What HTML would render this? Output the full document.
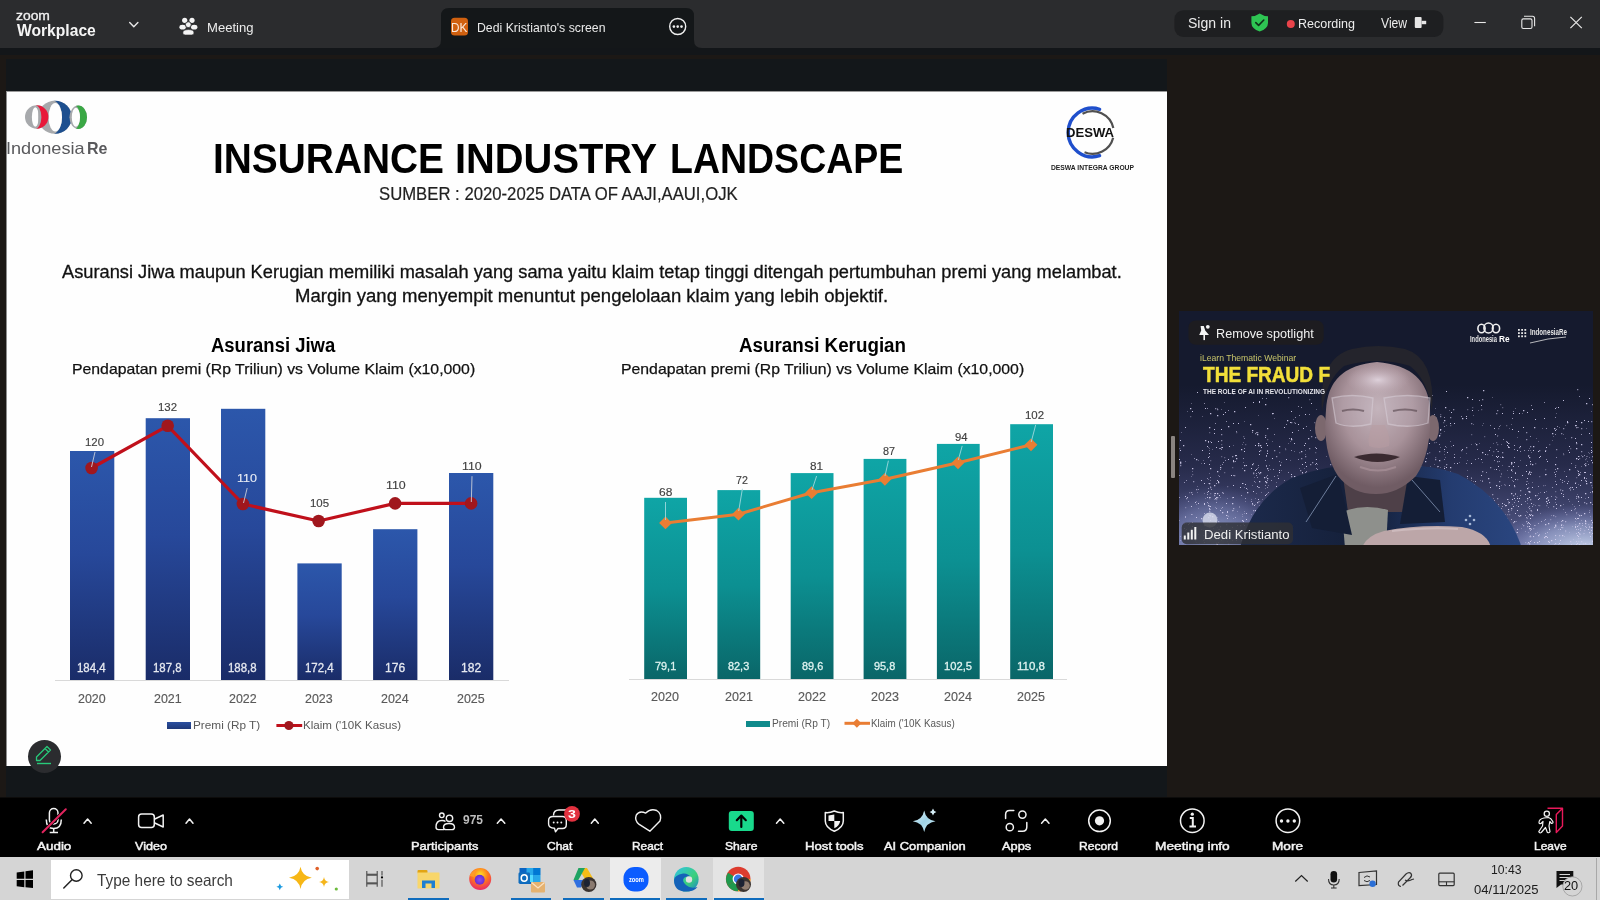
<!DOCTYPE html>
<html><head><meta charset="utf-8"><title>Zoom</title><style>
*{margin:0;padding:0;box-sizing:border-box}
html,body{width:1600px;height:900px;overflow:hidden;background:#1c1815;font-family:"Liberation Sans",sans-serif}
.a{position:absolute}
.t{position:absolute;white-space:pre;font-family:"Liberation Sans",sans-serif}
svg{position:absolute;overflow:visible}
</style></head>
<body>
<div class="a" style="left:0;top:0;width:1600px;height:48px;background:#2b2c2e"></div>
<div class="a" style="left:0;top:48px;width:1600px;height:7px;background:#131619"></div>
<div class="a" style="left:0;top:55px;width:1600px;height:742px;background:#1c1815"></div>
<div class="a" style="left:6px;top:59px;width:1161px;height:738px;background:#13171a"></div>
<div class="a" style="left:6px;top:91px;width:1161px;height:675px;background:#fefefe;border-left:1px solid #8e8e8e;border-top:1px solid #9a9a9a"></div>
<div class="a" style="left:0;top:797px;width:1600px;height:1px;background:#0d0c0b"></div>
<div class="a" style="left:0;top:798px;width:1600px;height:59px;background:#000"></div>
<div class="a" style="left:0;top:857px;width:1600px;height:43px;background:#d5d5d5"></div>
<div class="t" style="left:15.54px;top:10.00px;font-size:12.69px;line-height:12.69px;color:#f2f2f2;transform:scaleX(1.0933);transform-origin:0 0;-webkit-text-stroke:0.3px #f2f2f2;">zoom</div>
<div class="t" style="left:17.00px;top:23.00px;font-size:16.86px;line-height:16.86px;font-weight:bold;color:#f5f5f5;transform:scaleX(0.9274);transform-origin:0 0;">Workplace</div>
<svg class="a" style="left:0;top:0" width="1600" height="60">
<path d="M129.7,22.5 L133.8,26.7 L137.9,22.5" fill="none" stroke="#e8e8e8" stroke-width="1.4" stroke-linecap="round" stroke-linejoin="round"/>
<g fill="#f4f4f4"><circle cx="184.7" cy="20.3" r="2.6"/><circle cx="192" cy="20.3" r="2.6"/><ellipse cx="182.6" cy="27.2" rx="3.2" ry="2.4"/><ellipse cx="194.2" cy="27.2" rx="3.2" ry="2.4"/><circle cx="188.3" cy="24.7" r="2.9" stroke="#2b2c2e" stroke-width="0.8"/><path d="M182.8,33 Q182.8,29.6 188.4,29.6 Q194,29.6 194,33 Q194,35 191.5,35 L185.3,35 Q182.8,35 182.8,33Z" stroke="#2b2c2e" stroke-width="0.6"/></g>
<path d="M433,48 Q441,48 441,40 L441,16 Q441,8 449,8 L686,8 Q694,8 694,16 L694,40 Q694,48 702,48 Z" fill="#141719"/>
<rect x="451" y="17.8" width="17" height="17.6" rx="3.5" fill="#d0600f"/>
<circle cx="677.7" cy="26.5" r="8" fill="none" stroke="#f0f0f0" stroke-width="1.4"/><circle cx="673.9" cy="26.6" r="1.3" fill="#f0f0f0"/><circle cx="677.7" cy="26.6" r="1.3" fill="#f0f0f0"/><circle cx="681.5" cy="26.6" r="1.3" fill="#f0f0f0"/>
<rect x="1174.4" y="10.2" width="269" height="26.8" rx="9" fill="#1e1f21"/>
<path d="M1259.7,13.4 Q1263.5,16 1268,16.2 L1268,23 Q1268,28.5 1259.7,31.6 Q1251.4,28.5 1251.4,23 L1251.4,16.2 Q1256,16 1259.7,13.4Z" fill="#2ec553"/><path d="M1255.8,22.6 L1258.6,25.4 L1263.8,20" fill="none" stroke="#10331a" stroke-width="1.6" stroke-linecap="round" stroke-linejoin="round"/>
<circle cx="1290.8" cy="23.9" r="4" fill="#e9434a"/>
<rect x="1414.8" y="16.9" width="6.8" height="11" rx="1" fill="#e6e6e6"/><rect x="1421.6" y="20.8" width="4.6" height="3.4" fill="#e6e6e6"/>
<line x1="1474.4" y1="22.5" x2="1485.8" y2="22.5" stroke="#e8e8e8" stroke-width="1.1"/>
<rect x="1521.8" y="18.9" width="10.2" height="9.6" rx="1.5" fill="none" stroke="#e8e8e8" stroke-width="1.1"/><path d="M1524,16.3 L1532.5,16.3 Q1534.6,16.3 1534.6,18.4 L1534.6,26.3" fill="none" stroke="#e8e8e8" stroke-width="1.1"/>
<path d="M1570.4,16.8 L1581.8,28.2 M1581.8,16.8 L1570.4,28.2" stroke="#e8e8e8" stroke-width="1.2"/>
</svg>
<div class="t" style="left:206.77px;top:21.00px;font-size:13.23px;line-height:13.23px;color:#ececec;transform:scaleX(0.9905);transform-origin:0 0;">Meeting</div>
<div class="t" style="left:450.78px;top:22.00px;font-size:12.06px;line-height:12.06px;color:#fbe9dc;transform:scaleX(0.9778);transform-origin:0 0;">DK</div>
<div class="t" style="left:477.49px;top:21.00px;font-size:13.37px;line-height:13.37px;color:#eaeaea;transform:scaleX(0.9182);transform-origin:0 0;">Dedi Kristianto's screen</div>
<div class="t" style="left:1187.86px;top:16.00px;font-size:14.53px;line-height:14.53px;color:#ececec;transform:scaleX(0.9681);transform-origin:0 0;">Sign in</div>
<div class="t" style="left:1298.47px;top:17.00px;font-size:13.52px;line-height:13.52px;color:#ececec;transform:scaleX(0.9254);transform-origin:0 0;">Recording</div>
<div class="t" style="left:1380.50px;top:16.00px;font-size:14.53px;line-height:14.53px;color:#ececec;transform:scaleX(0.8384);transform-origin:0 0;">View</div>
<svg class="a" style="left:0;top:0" width="1600" height="900">
<defs>
<mask id="m1"><rect x="0" y="0" width="200" height="200" fill="#fff"/><ellipse cx="34.3" cy="117" rx="7.1" ry="12.2" fill="#000"/><rect x="0" y="0" width="34.3" height="200" fill="#000"/></mask>
<mask id="m2"><rect x="0" y="0" width="200" height="200" fill="#fff"/><ellipse cx="52" cy="117.25" rx="10" ry="16.9" fill="#000"/><rect x="0" y="0" width="52" height="200" fill="#000"/></mask>
<mask id="m3"><rect x="0" y="0" width="200" height="200" fill="#fff"/><ellipse cx="74" cy="117.25" rx="6" ry="12.1" fill="#000"/><rect x="0" y="0" width="74" height="200" fill="#000"/></mask>
</defs>
<ellipse cx="54.9" cy="117.25" rx="16.9" ry="16.5" fill="#a7a9ac"/>
<ellipse cx="54.9" cy="117.25" rx="16.9" ry="16.5" fill="#1d4f8f" mask="url(#m2)"/>
<ellipse cx="55.25" cy="117.25" rx="6.75" ry="14.3" fill="#fefefe"/>
<ellipse cx="36.7" cy="117" rx="11.7" ry="11.8" fill="#a7a9ac"/>
<ellipse cx="35.3" cy="117" rx="3.4" ry="9.8" fill="#fefefe"/>
<rect x="38.3" y="108" width="2.6" height="18" fill="#a7a9ac"/>
<ellipse cx="36.7" cy="117" rx="11.7" ry="11.8" fill="#e8193a" mask="url(#m1)"/>
<ellipse cx="78.25" cy="117.25" rx="8.75" ry="11.75" fill="#a7a9ac"/>
<ellipse cx="78.25" cy="117.25" rx="8.75" ry="11.75" fill="#3aa845" mask="url(#m3)"/>
<ellipse cx="75.9" cy="117.25" rx="4.1" ry="9.5" fill="#fefefe"/>
</svg>
<div class="t" style="left:5.74px;top:141.00px;font-size:16.72px;line-height:16.72px;color:#59595c;transform:scaleX(1.0845);transform-origin:0 0;">Indonesia</div>
<div class="t" style="left:87.13px;top:141.00px;font-size:16.72px;line-height:16.72px;font-weight:bold;color:#59595c;transform:scaleX(0.9572);transform-origin:0 0;">Re</div>
<svg class="a" style="left:0;top:0" width="1600" height="900"><path d="M1099.60,109.26 A24.3,24.3 0 1 0 1099.60,155.74" fill="none" stroke="#1f4fcc" stroke-width="3.4" stroke-linecap="round"/><path d="M1082.50,113.69 A21.3,21.3 0 0 1 1113.33,128.07" fill="none" stroke="#505050" stroke-width="2.2"/><path d="M1113.17,137.65 A21.3,21.3 0 0 1 1084.52,152.25" fill="none" stroke="#505050" stroke-width="2.2"/></svg>
<div class="t" style="left:1066.18px;top:126.00px;font-size:13.52px;line-height:13.52px;font-weight:bold;color:#111;transform:scaleX(0.9693);transform-origin:0 0;">DESWA</div>
<div class="t" style="left:1050.80px;top:164.00px;font-size:7.27px;line-height:7.27px;font-weight:bold;color:#222;transform:scaleX(0.9274);transform-origin:0 0;">DESWA INTEGRA GROUP</div>
<div class="t" style="left:213.19px;top:138.00px;font-size:41.93px;line-height:41.93px;font-weight:bold;color:#000;transform:scaleX(0.9270);transform-origin:0 0;">INSURANCE</div>
<div class="t" style="left:455.44px;top:138.00px;font-size:41.93px;line-height:41.93px;font-weight:bold;color:#000;transform:scaleX(0.9505);transform-origin:0 0;">INDUSTRY</div>
<div class="t" style="left:669.97px;top:138.00px;font-size:41.93px;line-height:41.93px;font-weight:bold;color:#000;transform:scaleX(0.8943);transform-origin:0 0;">LANDSCAPE</div>
<div class="t" style="left:378.99px;top:186.00px;font-size:17.88px;line-height:17.88px;color:#1f1f1f;transform:scaleX(0.9353);transform-origin:0 0;-webkit-text-stroke:0.2px #1f1f1f;">SUMBER : 2020-2025 DATA OF AAJI,AAUI,OJK</div>
<div class="t" style="left:61.90px;top:264.00px;font-size:17.44px;line-height:17.44px;color:#111;transform:scaleX(1.0463);transform-origin:0 0;-webkit-text-stroke:0.3px #111;">Asuransi Jiwa maupun Kerugian memiliki masalah yang sama yaitu klaim tetap tinggi ditengah pertumbuhan premi yang melambat.</div>
<div class="t" style="left:295.49px;top:288.00px;font-size:17.88px;line-height:17.88px;color:#111;transform:scaleX(1.0373);transform-origin:0 0;-webkit-text-stroke:0.3px #111;">Margin yang menyempit menuntut pengelolaan klaim yang lebih objektif.</div>
<div class="t" style="left:211.19px;top:336.00px;font-size:19.77px;line-height:19.77px;font-weight:bold;color:#000;transform:scaleX(0.9344);transform-origin:0 0;">Asuransi Jiwa</div>
<div class="t" style="left:72.10px;top:361.00px;font-size:15.12px;line-height:15.12px;color:#111;transform:scaleX(1.0459);transform-origin:0 0;-webkit-text-stroke:0.25px #111;">Pendapatan premi (Rp Triliun) vs Volume Klaim (x10,000)</div>
<div class="t" style="left:739.29px;top:336.00px;font-size:19.77px;line-height:19.77px;font-weight:bold;color:#000;transform:scaleX(0.9504);transform-origin:0 0;">Asuransi Kerugian</div>
<div class="t" style="left:621.19px;top:361.00px;font-size:15.12px;line-height:15.12px;color:#111;transform:scaleX(1.0459);transform-origin:0 0;-webkit-text-stroke:0.25px #111;">Pendapatan premi (Rp Triliun) vs Volume Klaim (x10,000)</div>
<div class="a" style="left:55px;top:680px;width:454px;height:1px;background:#d9d9d9"></div>
<svg class="a" style="left:0;top:0" width="1600" height="900" viewBox="0 0 1600 900">
<defs><linearGradient id="gb" x1="0" y1="0" x2="0" y2="1"><stop offset="0" stop-color="#2c57ab"/><stop offset="0.45" stop-color="#27489a"/><stop offset="1" stop-color="#1a2c68"/></linearGradient></defs>
<rect x="70" y="451" width="44.3" height="229" fill="url(#gb)"/>
<rect x="145.7" y="418.2" width="44.3" height="261.8" fill="url(#gb)"/>
<rect x="221" y="408.8" width="44.3" height="271.2" fill="url(#gb)"/>
<rect x="297.4" y="563.4" width="44.3" height="116.60000000000002" fill="url(#gb)"/>
<rect x="373.1" y="529.2" width="44.3" height="150.79999999999995" fill="url(#gb)"/>
<rect x="449" y="473" width="44.3" height="207" fill="url(#gb)"/>
<path d="M91.6,468 L167.7,425.8 L242.9,504 L318.6,521 L395.1,503.4 L471.1,503.4" fill="none" stroke="#c0101b" stroke-width="3.2" stroke-linejoin="round"/>
<circle cx="91.6" cy="468" r="6.3" fill="#a0171d"/>
<circle cx="167.7" cy="425.8" r="6.3" fill="#a0171d"/>
<circle cx="242.9" cy="504" r="6.3" fill="#a0171d"/>
<circle cx="318.6" cy="521" r="6.3" fill="#a0171d"/>
<circle cx="395.1" cy="503.4" r="6.3" fill="#a0171d"/>
<circle cx="471.1" cy="503.4" r="6.3" fill="#a0171d"/>
<line x1="95" y1="452" x2="91.5" y2="467" stroke="#c8cdd8" stroke-width="0.9"/>
<line x1="247.2" y1="488" x2="243.5" y2="503" stroke="#c8cdd8" stroke-width="0.9"/>
<line x1="472" y1="476.2" x2="471.3" y2="502" stroke="#c8cdd8" stroke-width="0.9"/>
</svg>
<div class="t" style="left:84.94px;top:437.00px;font-size:11.48px;line-height:11.48px;color:#404040;transform:scaleX(0.9939);transform-origin:0 0;-webkit-text-stroke:0.15px #404040;">120</div>
<div class="t" style="left:157.69px;top:402.00px;font-size:11.48px;line-height:11.48px;color:#404040;transform:scaleX(0.9939);transform-origin:0 0;-webkit-text-stroke:0.15px #404040;">132</div>
<div class="t" style="left:236.72px;top:473.00px;font-size:11.48px;line-height:11.48px;color:#e8ecf4;transform:scaleX(1.0874);transform-origin:0 0;-webkit-text-stroke:0.15px #e8ecf4;">110</div>
<div class="t" style="left:309.61px;top:498.00px;font-size:11.48px;line-height:11.48px;color:#404040;transform:scaleX(0.9982);transform-origin:0 0;-webkit-text-stroke:0.15px #404040;">105</div>
<div class="t" style="left:385.59px;top:480.00px;font-size:11.48px;line-height:11.48px;color:#404040;transform:scaleX(1.0812);transform-origin:0 0;-webkit-text-stroke:0.15px #404040;">110</div>
<div class="t" style="left:462.02px;top:461.00px;font-size:11.48px;line-height:11.48px;color:#404040;transform:scaleX(1.0756);transform-origin:0 0;-webkit-text-stroke:0.15px #404040;">110</div>
<div class="t" style="left:77.45px;top:662.00px;font-size:12.50px;line-height:12.50px;color:#e6e9f0;transform:scaleX(0.9154);transform-origin:0 0;-webkit-text-stroke:0.3px #e6e9f0;">184,4</div>
<div class="t" style="left:153.15px;top:662.00px;font-size:12.50px;line-height:12.50px;color:#e6e9f0;transform:scaleX(0.9154);transform-origin:0 0;-webkit-text-stroke:0.3px #e6e9f0;">187,8</div>
<div class="t" style="left:228.45px;top:662.00px;font-size:12.50px;line-height:12.50px;color:#e6e9f0;transform:scaleX(0.9154);transform-origin:0 0;-webkit-text-stroke:0.3px #e6e9f0;">188,8</div>
<div class="t" style="left:304.85px;top:662.00px;font-size:12.50px;line-height:12.50px;color:#e6e9f0;transform:scaleX(0.9154);transform-origin:0 0;-webkit-text-stroke:0.3px #e6e9f0;">172,4</div>
<div class="t" style="left:384.91px;top:662.00px;font-size:12.50px;line-height:12.50px;color:#e6e9f0;transform:scaleX(0.9644);transform-origin:0 0;-webkit-text-stroke:0.3px #e6e9f0;">176</div>
<div class="t" style="left:460.81px;top:662.00px;font-size:12.50px;line-height:12.50px;color:#e6e9f0;transform:scaleX(0.9644);transform-origin:0 0;-webkit-text-stroke:0.3px #e6e9f0;">182</div>
<div class="t" style="left:77.95px;top:693.00px;font-size:12.94px;line-height:12.94px;color:#595959;transform:scaleX(0.9613);transform-origin:0 0;-webkit-text-stroke:0.15px #595959;">2020</div>
<div class="t" style="left:153.65px;top:693.00px;font-size:12.94px;line-height:12.94px;color:#595959;transform:scaleX(0.9613);transform-origin:0 0;-webkit-text-stroke:0.15px #595959;">2021</div>
<div class="t" style="left:228.95px;top:693.00px;font-size:12.94px;line-height:12.94px;color:#595959;transform:scaleX(0.9613);transform-origin:0 0;-webkit-text-stroke:0.15px #595959;">2022</div>
<div class="t" style="left:305.35px;top:693.00px;font-size:12.94px;line-height:12.94px;color:#595959;transform:scaleX(0.9613);transform-origin:0 0;-webkit-text-stroke:0.15px #595959;">2023</div>
<div class="t" style="left:381.05px;top:693.00px;font-size:12.94px;line-height:12.94px;color:#595959;transform:scaleX(0.9613);transform-origin:0 0;-webkit-text-stroke:0.15px #595959;">2024</div>
<div class="t" style="left:456.95px;top:693.00px;font-size:12.94px;line-height:12.94px;color:#595959;transform:scaleX(0.9613);transform-origin:0 0;-webkit-text-stroke:0.15px #595959;">2025</div>
<div class="a" style="left:166.6px;top:722.2px;width:24.3px;height:7.3px;background:linear-gradient(#2a4f9f,#1f3878)"></div>
<div class="t" style="left:192.57px;top:720.00px;font-size:11.34px;line-height:11.34px;color:#595959;transform:scaleX(1.0401);transform-origin:0 0;">Premi (Rp T)</div>
<svg class="a" style="left:0;top:0" width="1600" height="900"><line x1="276.4" y1="725.5" x2="302.2" y2="725.5" stroke="#c0101b" stroke-width="3"/><circle cx="288.9" cy="725.5" r="4.6" fill="#a0171d"/></svg>
<div class="t" style="left:303.48px;top:720.00px;font-size:11.34px;line-height:11.34px;color:#595959;transform:scaleX(1.0231);transform-origin:0 0;">Klaim ('10K Kasus)</div>
<div class="a" style="left:629px;top:679px;width:438px;height:1px;background:#d9d9d9"></div>
<svg class="a" style="left:0;top:0" width="1600" height="900" viewBox="0 0 1600 900">
<defs><linearGradient id="gt" x1="0" y1="0" x2="0" y2="1"><stop offset="0" stop-color="#0fa5a6"/><stop offset="0.5" stop-color="#0c9092"/><stop offset="1" stop-color="#0a6668"/></linearGradient></defs>
<rect x="644.2" y="497.8" width="42.8" height="181.2" fill="url(#gt)"/>
<rect x="717.4" y="490.1" width="42.8" height="188.89999999999998" fill="url(#gt)"/>
<rect x="790.7" y="473.1" width="42.8" height="205.89999999999998" fill="url(#gt)"/>
<rect x="863.6" y="458.9" width="42.8" height="220.10000000000002" fill="url(#gt)"/>
<rect x="936.9" y="443.9" width="42.8" height="235.10000000000002" fill="url(#gt)"/>
<rect x="1010.2" y="424.2" width="42.8" height="254.8" fill="url(#gt)"/>
<path d="M665.5,522.9 L738.5,514.2 L811.6,492.7 L884.9,479.3 L958,462.8 L1031,444.8" fill="none" stroke="#e97d33" stroke-width="3" stroke-linejoin="round"/>
<path d="M665.5,516.5 L671.9,522.9 L665.5,529.3 L659.1,522.9 Z" fill="#e97d33"/>
<path d="M738.5,507.80000000000007 L744.9,514.2 L738.5,520.6 L732.1,514.2 Z" fill="#e97d33"/>
<path d="M811.6,486.3 L818.0,492.7 L811.6,499.09999999999997 L805.2,492.7 Z" fill="#e97d33"/>
<path d="M884.9,472.90000000000003 L891.3,479.3 L884.9,485.7 L878.5,479.3 Z" fill="#e97d33"/>
<path d="M958,456.40000000000003 L964.4,462.8 L958,469.2 L951.6,462.8 Z" fill="#e97d33"/>
<path d="M1031,438.40000000000003 L1037.4,444.8 L1031,451.2 L1024.6,444.8 Z" fill="#e97d33"/>
<line x1="665.5" y1="502" x2="665.5" y2="520" stroke="#9ed8dc" stroke-width="0.9"/>
<line x1="742.4" y1="488.8" x2="738.7" y2="511" stroke="#9ed8dc" stroke-width="0.9"/>
<line x1="816.6" y1="476" x2="812" y2="490" stroke="#9ed8dc" stroke-width="0.9"/>
<line x1="888.4" y1="460.7" x2="885" y2="476" stroke="#9ed8dc" stroke-width="0.9"/>
<line x1="962.2" y1="445.9" x2="958.3" y2="460" stroke="#9ed8dc" stroke-width="0.9"/>
<line x1="1035.7" y1="424.8" x2="1031.2" y2="442" stroke="#9ed8dc" stroke-width="0.9"/>
</svg>
<div class="t" style="left:658.60px;top:487.00px;font-size:11.05px;line-height:11.05px;color:#404040;transform:scaleX(1.0855);transform-origin:0 0;-webkit-text-stroke:0.15px #404040;">68</div>
<div class="t" style="left:736.11px;top:475.00px;font-size:11.05px;line-height:11.05px;color:#404040;transform:scaleX(0.9690);transform-origin:0 0;-webkit-text-stroke:0.15px #404040;">72</div>
<div class="t" style="left:809.61px;top:461.00px;font-size:11.05px;line-height:11.05px;color:#404040;transform:scaleX(1.0676);transform-origin:0 0;-webkit-text-stroke:0.15px #404040;">81</div>
<div class="t" style="left:882.70px;top:446.00px;font-size:11.05px;line-height:11.05px;color:#404040;transform:scaleX(0.9805);transform-origin:0 0;-webkit-text-stroke:0.15px #404040;">87</div>
<div class="t" style="left:954.98px;top:432.00px;font-size:11.05px;line-height:11.05px;color:#404040;transform:scaleX(1.0230);transform-origin:0 0;-webkit-text-stroke:0.15px #404040;">94</div>
<div class="t" style="left:1025.31px;top:410.00px;font-size:11.05px;line-height:11.05px;color:#404040;transform:scaleX(1.0376);transform-origin:0 0;-webkit-text-stroke:0.15px #404040;">102</div>
<div class="t" style="left:655.05px;top:660.00px;font-size:11.63px;line-height:11.63px;color:#dff3f0;transform:scaleX(0.9374);transform-origin:0 0;-webkit-text-stroke:0.3px #dff3f0;">79,1</div>
<div class="t" style="left:728.25px;top:660.00px;font-size:11.63px;line-height:11.63px;color:#dff3f0;transform:scaleX(0.9374);transform-origin:0 0;-webkit-text-stroke:0.3px #dff3f0;">82,3</div>
<div class="t" style="left:801.55px;top:660.00px;font-size:11.63px;line-height:11.63px;color:#dff3f0;transform:scaleX(0.9374);transform-origin:0 0;-webkit-text-stroke:0.3px #dff3f0;">89,6</div>
<div class="t" style="left:874.45px;top:660.00px;font-size:11.63px;line-height:11.63px;color:#dff3f0;transform:scaleX(0.9374);transform-origin:0 0;-webkit-text-stroke:0.3px #dff3f0;">95,8</div>
<div class="t" style="left:943.76px;top:660.00px;font-size:11.63px;line-height:11.63px;color:#dff3f0;transform:scaleX(0.9626);transform-origin:0 0;-webkit-text-stroke:0.3px #dff3f0;">102,5</div>
<div class="t" style="left:1017.06px;top:660.00px;font-size:11.63px;line-height:11.63px;color:#dff3f0;transform:scaleX(0.9923);transform-origin:0 0;-webkit-text-stroke:0.3px #dff3f0;">110,8</div>
<div class="t" style="left:651.34px;top:691.00px;font-size:12.21px;line-height:12.21px;color:#595959;transform:scaleX(1.0262);transform-origin:0 0;-webkit-text-stroke:0.15px #595959;">2020</div>
<div class="t" style="left:724.54px;top:691.00px;font-size:12.21px;line-height:12.21px;color:#595959;transform:scaleX(1.0262);transform-origin:0 0;-webkit-text-stroke:0.15px #595959;">2021</div>
<div class="t" style="left:797.84px;top:691.00px;font-size:12.21px;line-height:12.21px;color:#595959;transform:scaleX(1.0262);transform-origin:0 0;-webkit-text-stroke:0.15px #595959;">2022</div>
<div class="t" style="left:870.74px;top:691.00px;font-size:12.21px;line-height:12.21px;color:#595959;transform:scaleX(1.0262);transform-origin:0 0;-webkit-text-stroke:0.15px #595959;">2023</div>
<div class="t" style="left:944.04px;top:691.00px;font-size:12.21px;line-height:12.21px;color:#595959;transform:scaleX(1.0262);transform-origin:0 0;-webkit-text-stroke:0.15px #595959;">2024</div>
<div class="t" style="left:1017.34px;top:691.00px;font-size:12.21px;line-height:12.21px;color:#595959;transform:scaleX(1.0262);transform-origin:0 0;-webkit-text-stroke:0.15px #595959;">2025</div>
<div class="a" style="left:745.8px;top:721px;width:23.8px;height:5.6px;background:#0f8a8b"></div>
<div class="t" style="left:771.66px;top:719.00px;font-size:10.47px;line-height:10.47px;color:#595959;transform:scaleX(0.9727);transform-origin:0 0;">Premi (Rp T)</div>
<svg class="a" style="left:0;top:0" width="1600" height="900"><line x1="844.5" y1="723.3" x2="870" y2="723.3" stroke="#e97d33" stroke-width="3"/><path d="M856.9,718.8 L861.4,723.3 L856.9,727.8 L852.4,723.3Z" fill="#e97d33"/></svg>
<div class="t" style="left:871.28px;top:719.00px;font-size:10.47px;line-height:10.47px;color:#595959;transform:scaleX(0.9434);transform-origin:0 0;">Klaim ('10K Kasus)</div>
<div class="a" style="left:27.5px;top:739.5px;width:33px;height:33px;border-radius:50%;background:#2b2c2f"></div>
<svg class="a" style="left:0;top:0" width="1600" height="900"><path d="M36.5,760.5 L36.5,757 L47,746.5 L50.5,750 L40,760.5 Z M45,748.5 L48.5,752" fill="none" stroke="#28c97a" stroke-width="1.3" stroke-linejoin="round"/><line x1="37" y1="763.5" x2="51" y2="763.5" stroke="#28c97a" stroke-width="1.4"/></svg>
<div class="a" style="left:1170.7px;top:436px;width:4.2px;height:41.8px;background:#8a8480;border-radius:1px"></div>
<svg class="a" style="left:0;top:0" width="1600" height="900">
<defs><clipPath id="vc"><rect x="1179" y="311" width="414" height="234"/></clipPath><linearGradient id="haze" x1="0" y1="0" x2="0" y2="1"><stop offset="0" stop-color="#4a4c8a" stop-opacity="0"/><stop offset="0.5" stop-color="#50528e" stop-opacity="0.3"/><stop offset="1" stop-color="#7a80bc" stop-opacity="0.7"/></linearGradient><radialGradient id="gl1" cx="0.5" cy="0.5" r="0.5"><stop offset="0" stop-color="#b4c2ea" stop-opacity="0.95"/><stop offset="0.6" stop-color="#8f9ad0" stop-opacity="0.5"/><stop offset="1" stop-color="#6a70b0" stop-opacity="0"/></radialGradient><radialGradient id="gl2" cx="0.5" cy="0.5" r="0.5"><stop offset="0" stop-color="#d0dcf0" stop-opacity="1"/><stop offset="0.55" stop-color="#a8b4dc" stop-opacity="0.6"/><stop offset="1" stop-color="#7a80c0" stop-opacity="0"/></radialGradient><radialGradient id="face" cx="0.5" cy="0.35" r="0.6"><stop offset="0" stop-color="#c4b4bc"/><stop offset="0.55" stop-color="#a8929a"/><stop offset="1" stop-color="#705c64"/></radialGradient><radialGradient id="fore" cx="0.5" cy="0.5" r="0.5"><stop offset="0" stop-color="#e2d6e0" stop-opacity="0.9"/><stop offset="1" stop-color="#c0aab4" stop-opacity="0"/></radialGradient><linearGradient id="shirt" x1="0" y1="0" x2="1" y2="0"><stop offset="0" stop-color="#1c2a4c"/><stop offset="0.45" stop-color="#141f38"/><stop offset="0.75" stop-color="#243c70"/><stop offset="1" stop-color="#2a4680"/></linearGradient></defs>
<g clip-path="url(#vc)">
<rect x="1179" y="311" width="414" height="234" fill="#151a2e"/>
<rect x="1179" y="385" width="414" height="160" fill="url(#haze)"/>
<ellipse cx="1215" cy="540" rx="70" ry="55" fill="url(#gl1)" opacity="0.75"/>
<ellipse cx="1585" cy="552" rx="95" ry="48" fill="url(#gl2)"/>
<path d="M1429 452h1.3v1.3h-1.3zM1338 478h1v1h-1zM1344 512h1v1h-1zM1340 457h1v1h-1zM1371 524h1v1h-1zM1466 482h1.3v1.3h-1.3zM1404 543h1.3v1.3h-1.3zM1233 510h1v1h-1zM1232 467h1.3v1.3h-1.3zM1402 523h1.3v1.3h-1.3zM1553 436h1v1h-1zM1258 415h1v1h-1zM1227 486h1v1h-1zM1530 450h1v1h-1zM1555 535h1.3v1.3h-1.3zM1320 507h1.3v1.3h-1.3zM1285 449h1.3v1.3h-1.3zM1296 500h1v1h-1zM1305 526h1v1h-1zM1379 420h1v1h-1zM1508 509h1.3v1.3h-1.3zM1445 482h1v1h-1zM1508 477h1v1h-1zM1592 492h1.3v1.3h-1.3zM1277 475h1.3v1.3h-1.3zM1574 506h1v1h-1zM1258 519h1v1h-1zM1210 516h1v1h-1zM1397 469h1v1h-1zM1366 480h1v1h-1zM1180 461h1.3v1.3h-1.3zM1247 489h1v1h-1zM1507 470h1v1h-1zM1440 414h1.3v1.3h-1.3zM1391 482h1v1h-1zM1192 471h1v1h-1zM1423 505h1.3v1.3h-1.3zM1294 533h1v1h-1zM1465 512h1v1h-1zM1285 448h1v1h-1zM1339 494h1.3v1.3h-1.3zM1379 518h1v1h-1zM1402 493h1.3v1.3h-1.3zM1473 517h1v1h-1zM1267 529h1.3v1.3h-1.3zM1514 445h1v1h-1zM1576 477h1.3v1.3h-1.3zM1244 511h1v1h-1zM1242 444h1v1h-1zM1261 492h1v1h-1zM1529 536h1.3v1.3h-1.3zM1279 496h1v1h-1zM1496 442h1.3v1.3h-1.3zM1540 492h1v1h-1zM1583 544h1.3v1.3h-1.3zM1454 540h1v1h-1zM1371 412h1v1h-1zM1526 481h1v1h-1zM1338 489h1v1h-1zM1570 489h1v1h-1zM1434 511h1v1h-1zM1210 509h1v1h-1zM1563 504h1v1h-1zM1449 492h1v1h-1zM1418 393h1v1h-1zM1508 501h1v1h-1zM1324 545h1v1h-1zM1387 440h1.3v1.3h-1.3zM1474 515h1v1h-1zM1444 451h1v1h-1zM1257 543h1.3v1.3h-1.3zM1417 494h1v1h-1zM1508 502h1v1h-1zM1427 544h1.3v1.3h-1.3zM1380 493h1v1h-1zM1565 425h1v1h-1zM1190 416h1.3v1.3h-1.3zM1209 527h1.3v1.3h-1.3zM1306 484h1v1h-1zM1209 532h1v1h-1zM1364 541h1.3v1.3h-1.3zM1465 535h1v1h-1zM1445 470h1v1h-1zM1245 501h1v1h-1zM1512 480h1v1h-1zM1343 487h1.3v1.3h-1.3zM1440 523h1v1h-1zM1445 531h1v1h-1zM1210 486h1v1h-1zM1253 472h1.3v1.3h-1.3zM1306 531h1.3v1.3h-1.3zM1389 455h1v1h-1zM1217 408h1v1h-1zM1272 441h1v1h-1zM1216 544h1v1h-1zM1208 479h1v1h-1zM1555 502h1v1h-1zM1233 445h1v1h-1zM1550 519h1.3v1.3h-1.3zM1306 526h1.3v1.3h-1.3zM1204 535h1v1h-1zM1565 530h1.3v1.3h-1.3zM1301 489h1.3v1.3h-1.3zM1570 490h1v1h-1zM1313 487h1v1h-1zM1576 513h1v1h-1zM1527 543h1.3v1.3h-1.3zM1280 464h1v1h-1zM1537 495h1v1h-1zM1339 526h1.3v1.3h-1.3zM1208 503h1v1h-1zM1394 537h1v1h-1zM1344 540h1v1h-1zM1450 471h1v1h-1zM1224 402h1v1h-1zM1447 486h1v1h-1zM1556 407h1v1h-1zM1496 534h1v1h-1zM1295 482h1v1h-1zM1467 478h1v1h-1zM1525 542h1.3v1.3h-1.3zM1301 527h1.3v1.3h-1.3zM1302 473h1.3v1.3h-1.3zM1208 447h1v1h-1zM1290 523h1v1h-1zM1245 444h1.3v1.3h-1.3zM1372 487h1v1h-1zM1572 504h1v1h-1zM1187 411h1v1h-1zM1466 453h1v1h-1zM1526 511h1v1h-1zM1483 494h1v1h-1zM1198 508h1v1h-1zM1429 469h1v1h-1zM1266 455h1v1h-1zM1427 538h1v1h-1zM1333 499h1v1h-1zM1384 496h1.3v1.3h-1.3zM1305 545h1v1h-1zM1509 447h1v1h-1zM1290 529h1v1h-1zM1185 530h1v1h-1zM1455 533h1.3v1.3h-1.3zM1197 486h1v1h-1zM1265 505h1v1h-1zM1527 503h1v1h-1zM1305 482h1v1h-1zM1395 434h1.3v1.3h-1.3zM1529 544h1.3v1.3h-1.3zM1472 509h1v1h-1zM1569 532h1v1h-1zM1434 485h1v1h-1zM1359 515h1v1h-1zM1412 491h1v1h-1zM1299 479h1.3v1.3h-1.3zM1254 532h1v1h-1zM1207 539h1.3v1.3h-1.3zM1508 503h1.3v1.3h-1.3zM1515 408h1v1h-1zM1214 499h1v1h-1zM1216 534h1v1h-1zM1586 456h1v1h-1zM1312 480h1.3v1.3h-1.3zM1383 513h1v1h-1zM1445 528h1v1h-1zM1577 427h1v1h-1zM1586 458h1v1h-1zM1352 530h1.3v1.3h-1.3zM1511 463h1.3v1.3h-1.3zM1204 545h1v1h-1zM1434 498h1v1h-1zM1528 532h1v1h-1zM1208 483h1v1h-1zM1255 482h1v1h-1zM1216 542h1v1h-1zM1484 540h1v1h-1zM1378 525h1.3v1.3h-1.3zM1401 417h1.3v1.3h-1.3zM1252 485h1v1h-1zM1185 461h1v1h-1zM1304 543h1v1h-1zM1434 442h1.3v1.3h-1.3zM1201 529h1v1h-1zM1267 513h1v1h-1zM1526 545h1v1h-1zM1316 475h1.3v1.3h-1.3zM1450 425h1.3v1.3h-1.3zM1578 538h1.3v1.3h-1.3zM1210 441h1v1h-1zM1369 498h1v1h-1zM1475 443h1v1h-1zM1536 438h1v1h-1zM1418 545h1.3v1.3h-1.3zM1434 524h1v1h-1zM1276 482h1v1h-1zM1243 442h1v1h-1zM1498 428h1.3v1.3h-1.3zM1251 514h1v1h-1zM1472 523h1v1h-1zM1228 516h1v1h-1zM1400 471h1v1h-1zM1392 406h1v1h-1zM1501 474h1v1h-1zM1373 543h1v1h-1zM1473 424h1v1h-1zM1530 463h1.3v1.3h-1.3zM1180 540h1v1h-1zM1266 509h1v1h-1zM1507 514h1.3v1.3h-1.3zM1558 529h1v1h-1zM1365 399h1.3v1.3h-1.3zM1465 521h1v1h-1zM1583 533h1.3v1.3h-1.3zM1345 471h1.3v1.3h-1.3zM1507 528h1v1h-1zM1198 460h1v1h-1zM1466 535h1v1h-1zM1498 515h1v1h-1zM1418 506h1v1h-1zM1463 500h1.3v1.3h-1.3zM1444 486h1v1h-1zM1502 465h1v1h-1zM1305 508h1v1h-1zM1233 518h1v1h-1zM1497 451h1v1h-1zM1442 528h1.3v1.3h-1.3zM1509 443h1v1h-1zM1444 431h1v1h-1zM1239 506h1v1h-1zM1576 519h1v1h-1zM1589 543h1v1h-1zM1242 468h1v1h-1zM1590 516h1v1h-1zM1186 523h1v1h-1zM1341 507h1v1h-1zM1584 530h1.3v1.3h-1.3zM1517 496h1v1h-1zM1474 501h1v1h-1zM1182 545h1v1h-1zM1505 485h1v1h-1zM1420 534h1v1h-1zM1397 531h1v1h-1zM1348 482h1.3v1.3h-1.3zM1333 474h1v1h-1zM1450 441h1v1h-1zM1196 542h1v1h-1zM1586 428h1v1h-1zM1592 487h1.3v1.3h-1.3zM1292 534h1v1h-1zM1262 499h1v1h-1zM1368 454h1.3v1.3h-1.3zM1394 507h1.3v1.3h-1.3zM1205 498h1v1h-1zM1281 470h1v1h-1zM1386 498h1v1h-1zM1512 471h1v1h-1zM1410 533h1v1h-1zM1433 535h1v1h-1zM1416 431h1.3v1.3h-1.3zM1537 532h1v1h-1zM1540 513h1v1h-1zM1416 480h1v1h-1zM1341 462h1.3v1.3h-1.3zM1478 527h1.3v1.3h-1.3zM1305 454h1v1h-1zM1579 456h1v1h-1zM1580 534h1v1h-1zM1181 432h1v1h-1zM1276 519h1v1h-1zM1201 463h1v1h-1zM1183 539h1v1h-1zM1294 422h1.3v1.3h-1.3zM1563 525h1v1h-1zM1280 526h1v1h-1zM1528 483h1v1h-1zM1255 514h1v1h-1zM1493 537h1v1h-1zM1591 435h1v1h-1zM1585 543h1v1h-1zM1368 471h1v1h-1zM1427 428h1v1h-1zM1259 501h1.3v1.3h-1.3zM1294 508h1v1h-1zM1417 419h1v1h-1zM1210 460h1.3v1.3h-1.3zM1514 539h1v1h-1zM1305 493h1v1h-1zM1255 511h1v1h-1zM1258 467h1v1h-1zM1224 472h1.3v1.3h-1.3zM1493 498h1v1h-1zM1444 530h1v1h-1zM1497 435h1.3v1.3h-1.3zM1439 520h1v1h-1zM1381 499h1v1h-1zM1337 536h1v1h-1zM1440 493h1.3v1.3h-1.3zM1436 442h1v1h-1zM1217 517h1v1h-1zM1314 532h1.3v1.3h-1.3zM1517 437h1v1h-1zM1579 458h1.3v1.3h-1.3zM1290 530h1v1h-1zM1334 468h1v1h-1zM1340 533h1v1h-1zM1279 527h1v1h-1zM1585 498h1v1h-1zM1390 460h1v1h-1zM1259 505h1.3v1.3h-1.3zM1552 440h1v1h-1zM1473 527h1v1h-1zM1290 441h1v1h-1zM1191 476h1v1h-1zM1558 544h1v1h-1zM1371 541h1v1h-1zM1227 498h1v1h-1zM1545 485h1v1h-1zM1268 485h1v1h-1zM1581 455h1v1h-1zM1315 452h1.3v1.3h-1.3zM1209 498h1.3v1.3h-1.3zM1199 543h1v1h-1zM1492 397h1v1h-1zM1320 532h1.3v1.3h-1.3zM1270 469h1v1h-1zM1327 410h1v1h-1zM1531 452h1v1h-1zM1279 511h1.3v1.3h-1.3zM1492 455h1v1h-1zM1371 502h1v1h-1zM1439 436h1v1h-1zM1375 545h1v1h-1zM1330 525h1v1h-1zM1466 514h1.3v1.3h-1.3zM1579 534h1v1h-1zM1329 535h1v1h-1zM1575 524h1.3v1.3h-1.3zM1340 516h1v1h-1zM1421 476h1.3v1.3h-1.3zM1445 457h1v1h-1zM1372 523h1.3v1.3h-1.3zM1440 447h1v1h-1zM1316 409h1v1h-1zM1258 531h1v1h-1zM1327 471h1v1h-1zM1269 514h1v1h-1zM1511 510h1v1h-1zM1539 476h1.3v1.3h-1.3zM1354 469h1.3v1.3h-1.3zM1435 513h1.3v1.3h-1.3zM1563 453h1v1h-1zM1435 539h1v1h-1zM1316 540h1.3v1.3h-1.3zM1542 428h1v1h-1zM1472 510h1.3v1.3h-1.3zM1293 419h1v1h-1zM1451 446h1v1h-1zM1449 534h1v1h-1zM1237 511h1v1h-1zM1244 487h1v1h-1zM1281 526h1.3v1.3h-1.3zM1372 492h1.3v1.3h-1.3zM1578 427h1v1h-1zM1500 404h1.3v1.3h-1.3zM1220 465h1v1h-1zM1468 481h1.3v1.3h-1.3zM1444 514h1v1h-1zM1435 408h1v1h-1zM1555 524h1.3v1.3h-1.3zM1464 537h1v1h-1zM1179 448h1.3v1.3h-1.3zM1227 515h1.3v1.3h-1.3zM1353 431h1v1h-1zM1497 444h1.3v1.3h-1.3zM1251 499h1v1h-1zM1368 489h1v1h-1zM1256 515h1v1h-1zM1509 428h1v1h-1zM1407 472h1.3v1.3h-1.3zM1475 525h1.3v1.3h-1.3zM1592 451h1.3v1.3h-1.3zM1516 532h1v1h-1zM1435 510h1v1h-1zM1574 509h1.3v1.3h-1.3zM1304 538h1v1h-1zM1587 456h1v1h-1zM1435 457h1.3v1.3h-1.3zM1566 514h1.3v1.3h-1.3zM1531 511h1.3v1.3h-1.3zM1305 531h1v1h-1zM1554 527h1.3v1.3h-1.3zM1269 506h1v1h-1zM1380 470h1.3v1.3h-1.3zM1502 543h1.3v1.3h-1.3zM1515 541h1v1h-1zM1326 456h1v1h-1zM1203 460h1v1h-1zM1406 495h1.3v1.3h-1.3zM1299 468h1v1h-1zM1398 422h1v1h-1zM1505 514h1v1h-1zM1244 451h1v1h-1zM1410 484h1v1h-1zM1472 529h1v1h-1zM1397 526h1.3v1.3h-1.3zM1204 493h1v1h-1zM1394 493h1v1h-1zM1345 535h1v1h-1zM1538 493h1v1h-1zM1479 443h1v1h-1zM1575 521h1v1h-1zM1501 523h1.3v1.3h-1.3zM1341 518h1v1h-1zM1297 539h1v1h-1zM1533 504h1.3v1.3h-1.3zM1367 541h1v1h-1zM1453 529h1v1h-1zM1380 476h1.3v1.3h-1.3zM1242 514h1v1h-1zM1243 436h1.3v1.3h-1.3zM1583 543h1.3v1.3h-1.3zM1467 470h1v1h-1zM1472 484h1.3v1.3h-1.3zM1266 505h1v1h-1zM1327 517h1.3v1.3h-1.3zM1368 485h1v1h-1zM1344 428h1v1h-1zM1371 500h1v1h-1zM1591 485h1.3v1.3h-1.3zM1591 411h1v1h-1zM1243 524h1v1h-1zM1420 532h1v1h-1zM1215 537h1v1h-1zM1589 457h1v1h-1zM1243 542h1v1h-1zM1192 514h1v1h-1zM1411 502h1v1h-1zM1338 544h1v1h-1zM1371 527h1v1h-1zM1305 519h1.3v1.3h-1.3zM1371 540h1v1h-1zM1304 468h1v1h-1zM1344 526h1v1h-1zM1589 510h1.3v1.3h-1.3zM1581 520h1v1h-1zM1496 536h1v1h-1zM1494 469h1v1h-1zM1255 504h1v1h-1zM1332 544h1v1h-1zM1563 434h1v1h-1zM1239 507h1v1h-1zM1484 436h1.3v1.3h-1.3zM1446 477h1v1h-1zM1535 463h1.3v1.3h-1.3zM1517 479h1.3v1.3h-1.3zM1440 480h1v1h-1zM1545 469h1.3v1.3h-1.3zM1228 536h1.3v1.3h-1.3zM1449 526h1v1h-1zM1209 448h1v1h-1zM1390 540h1v1h-1zM1427 468h1v1h-1zM1493 512h1v1h-1zM1460 457h1v1h-1zM1447 476h1v1h-1zM1530 510h1.3v1.3h-1.3zM1369 418h1v1h-1zM1321 425h1v1h-1zM1401 489h1v1h-1zM1317 513h1v1h-1zM1330 510h1.3v1.3h-1.3zM1379 521h1v1h-1zM1573 539h1v1h-1zM1528 516h1v1h-1zM1592 540h1v1h-1zM1417 451h1v1h-1zM1392 432h1v1h-1zM1509 514h1.3v1.3h-1.3zM1555 496h1.3v1.3h-1.3zM1445 520h1v1h-1zM1533 536h1.3v1.3h-1.3zM1472 525h1v1h-1zM1324 477h1v1h-1zM1421 482h1v1h-1zM1501 519h1.3v1.3h-1.3zM1224 457h1.3v1.3h-1.3zM1464 513h1.3v1.3h-1.3zM1444 520h1.3v1.3h-1.3zM1318 537h1v1h-1zM1497 436h1v1h-1zM1539 505h1.3v1.3h-1.3zM1418 543h1v1h-1zM1509 541h1v1h-1zM1402 452h1.3v1.3h-1.3zM1385 521h1v1h-1zM1500 457h1v1h-1zM1385 533h1v1h-1zM1227 533h1.3v1.3h-1.3zM1304 481h1v1h-1zM1464 489h1v1h-1zM1325 537h1.3v1.3h-1.3zM1544 520h1v1h-1zM1242 516h1v1h-1zM1301 488h1v1h-1zM1511 424h1v1h-1zM1313 497h1.3v1.3h-1.3zM1409 518h1v1h-1zM1258 530h1v1h-1zM1560 490h1v1h-1zM1501 485h1v1h-1zM1500 476h1.3v1.3h-1.3zM1483 423h1v1h-1zM1334 513h1v1h-1zM1471 499h1v1h-1zM1220 497h1v1h-1zM1180 536h1v1h-1zM1445 407h1v1h-1zM1196 501h1v1h-1zM1430 466h1v1h-1zM1303 531h1v1h-1zM1494 539h1v1h-1zM1257 468h1v1h-1zM1325 544h1v1h-1zM1467 460h1v1h-1zM1471 501h1.3v1.3h-1.3zM1555 491h1.3v1.3h-1.3zM1548 499h1.3v1.3h-1.3zM1243 523h1v1h-1zM1220 536h1v1h-1zM1501 473h1v1h-1zM1254 516h1v1h-1zM1549 444h1.3v1.3h-1.3zM1473 415h1v1h-1zM1243 483h1v1h-1zM1444 466h1.3v1.3h-1.3zM1386 520h1.3v1.3h-1.3zM1405 483h1.3v1.3h-1.3zM1185 507h1.3v1.3h-1.3zM1576 458h1.3v1.3h-1.3zM1294 451h1v1h-1zM1372 540h1.3v1.3h-1.3zM1328 475h1.3v1.3h-1.3zM1189 492h1.3v1.3h-1.3zM1422 541h1v1h-1zM1531 540h1v1h-1zM1209 432h1.3v1.3h-1.3zM1478 410h1v1h-1zM1221 409h1v1h-1zM1286 511h1v1h-1zM1306 488h1.3v1.3h-1.3zM1557 522h1v1h-1zM1440 499h1v1h-1zM1362 507h1v1h-1zM1290 494h1.3v1.3h-1.3zM1443 483h1.3v1.3h-1.3zM1336 460h1.3v1.3h-1.3zM1460 542h1v1h-1zM1564 536h1v1h-1zM1527 500h1v1h-1zM1442 532h1v1h-1zM1366 537h1v1h-1zM1459 510h1v1h-1zM1469 511h1v1h-1zM1473 481h1v1h-1zM1305 450h1v1h-1zM1449 410h1v1h-1zM1417 467h1.3v1.3h-1.3zM1577 494h1v1h-1zM1444 454h1v1h-1zM1366 535h1v1h-1zM1528 507h1v1h-1zM1317 464h1v1h-1zM1258 530h1v1h-1zM1527 518h1v1h-1zM1254 477h1v1h-1zM1482 462h1v1h-1zM1554 544h1v1h-1zM1449 490h1v1h-1zM1530 535h1v1h-1zM1374 458h1.3v1.3h-1.3zM1472 407h1.3v1.3h-1.3zM1417 506h1v1h-1zM1343 518h1v1h-1zM1437 497h1v1h-1zM1371 485h1.3v1.3h-1.3zM1340 529h1v1h-1zM1446 509h1v1h-1zM1555 516h1.3v1.3h-1.3zM1440 535h1.3v1.3h-1.3zM1266 494h1v1h-1zM1588 452h1v1h-1zM1389 467h1v1h-1zM1459 544h1v1h-1zM1589 453h1v1h-1zM1221 538h1.3v1.3h-1.3zM1559 427h1v1h-1zM1218 475h1v1h-1zM1324 534h1v1h-1zM1546 498h1v1h-1zM1410 478h1v1h-1zM1473 519h1v1h-1zM1443 422h1.3v1.3h-1.3zM1362 466h1.3v1.3h-1.3zM1362 480h1v1h-1zM1535 525h1v1h-1zM1314 537h1v1h-1zM1472 518h1v1h-1zM1428 525h1v1h-1zM1217 535h1v1h-1zM1367 473h1.3v1.3h-1.3zM1449 500h1v1h-1zM1525 531h1v1h-1zM1546 474h1v1h-1zM1471 480h1v1h-1zM1591 524h1v1h-1zM1221 508h1v1h-1zM1427 519h1v1h-1zM1410 507h1v1h-1zM1288 519h1.3v1.3h-1.3zM1425 517h1v1h-1zM1530 492h1v1h-1zM1392 491h1v1h-1zM1482 425h1v1h-1zM1209 450h1v1h-1zM1380 459h1v1h-1zM1467 409h1.3v1.3h-1.3zM1520 460h1v1h-1zM1464 504h1v1h-1zM1212 449h1v1h-1zM1471 444h1v1h-1zM1371 452h1.3v1.3h-1.3zM1445 535h1v1h-1zM1347 494h1v1h-1zM1290 460h1v1h-1zM1580 538h1v1h-1zM1258 521h1v1h-1zM1210 493h1.3v1.3h-1.3zM1278 511h1v1h-1zM1527 481h1v1h-1zM1264 528h1v1h-1zM1394 462h1v1h-1zM1576 512h1.3v1.3h-1.3zM1592 475h1v1h-1zM1578 514h1v1h-1zM1232 534h1v1h-1zM1445 525h1v1h-1zM1584 533h1v1h-1zM1548 507h1v1h-1zM1421 469h1.3v1.3h-1.3zM1487 512h1v1h-1zM1490 447h1v1h-1zM1281 462h1v1h-1zM1339 537h1v1h-1zM1463 499h1v1h-1zM1256 493h1v1h-1zM1274 418h1v1h-1zM1390 517h1v1h-1zM1591 534h1v1h-1zM1192 474h1.3v1.3h-1.3zM1286 489h1v1h-1zM1294 506h1v1h-1zM1336 504h1v1h-1zM1520 544h1v1h-1zM1236 432h1.3v1.3h-1.3zM1279 495h1.3v1.3h-1.3zM1446 513h1v1h-1zM1191 454h1v1h-1zM1528 487h1.3v1.3h-1.3zM1299 452h1.3v1.3h-1.3zM1380 472h1v1h-1zM1267 527h1.3v1.3h-1.3zM1227 541h1v1h-1zM1578 541h1.3v1.3h-1.3zM1243 462h1v1h-1zM1502 407h1.3v1.3h-1.3zM1218 542h1.3v1.3h-1.3zM1316 392h1.3v1.3h-1.3zM1402 503h1.3v1.3h-1.3zM1508 466h1v1h-1zM1367 507h1v1h-1zM1315 542h1.3v1.3h-1.3zM1471 434h1.3v1.3h-1.3zM1293 495h1.3v1.3h-1.3zM1538 441h1v1h-1zM1459 462h1v1h-1zM1279 532h1v1h-1zM1179 520h1v1h-1zM1368 469h1.3v1.3h-1.3zM1253 540h1v1h-1zM1493 443h1v1h-1zM1411 529h1v1h-1zM1563 454h1.3v1.3h-1.3zM1391 518h1v1h-1zM1522 413h1v1h-1zM1210 480h1v1h-1zM1267 493h1v1h-1zM1469 502h1v1h-1zM1305 523h1v1h-1zM1575 465h1.3v1.3h-1.3zM1484 528h1.3v1.3h-1.3zM1546 505h1.3v1.3h-1.3zM1368 542h1.3v1.3h-1.3zM1304 493h1v1h-1zM1578 525h1.3v1.3h-1.3zM1288 443h1v1h-1zM1427 534h1v1h-1zM1464 527h1v1h-1zM1481 409h1.3v1.3h-1.3zM1411 531h1v1h-1zM1339 468h1v1h-1zM1471 477h1v1h-1zM1286 517h1v1h-1zM1386 468h1.3v1.3h-1.3zM1551 515h1v1h-1zM1434 464h1v1h-1zM1302 519h1v1h-1zM1439 542h1v1h-1zM1214 532h1v1h-1zM1535 505h1v1h-1zM1477 522h1v1h-1zM1363 466h1v1h-1zM1373 545h1v1h-1zM1560 489h1.3v1.3h-1.3zM1342 513h1.3v1.3h-1.3zM1569 501h1v1h-1zM1463 485h1v1h-1zM1305 532h1v1h-1zM1440 467h1v1h-1zM1254 519h1.3v1.3h-1.3zM1244 421h1v1h-1zM1396 443h1v1h-1zM1221 444h1.3v1.3h-1.3zM1367 490h1.3v1.3h-1.3zM1279 452h1.3v1.3h-1.3zM1585 459h1.3v1.3h-1.3zM1555 543h1v1h-1zM1386 499h1.3v1.3h-1.3zM1372 426h1v1h-1zM1353 487h1.3v1.3h-1.3zM1556 497h1.3v1.3h-1.3zM1592 462h1.3v1.3h-1.3zM1322 491h1.3v1.3h-1.3zM1197 492h1v1h-1zM1357 519h1v1h-1zM1339 528h1v1h-1zM1361 487h1v1h-1zM1259 519h1v1h-1zM1393 543h1.3v1.3h-1.3zM1354 445h1v1h-1zM1508 528h1v1h-1zM1533 528h1.3v1.3h-1.3zM1499 519h1v1h-1zM1343 522h1v1h-1zM1368 465h1.3v1.3h-1.3zM1501 444h1v1h-1zM1425 538h1v1h-1zM1403 451h1.3v1.3h-1.3zM1221 456h1.3v1.3h-1.3zM1521 528h1v1h-1zM1587 461h1v1h-1zM1361 399h1v1h-1zM1512 504h1v1h-1zM1310 507h1.3v1.3h-1.3zM1279 505h1v1h-1zM1482 480h1v1h-1zM1556 413h1v1h-1zM1581 466h1v1h-1zM1522 524h1v1h-1zM1386 509h1v1h-1zM1196 504h1v1h-1zM1309 399h1.3v1.3h-1.3zM1578 484h1v1h-1zM1371 497h1v1h-1zM1350 492h1.3v1.3h-1.3zM1353 429h1v1h-1zM1376 515h1.3v1.3h-1.3zM1575 467h1v1h-1zM1191 403h1v1h-1zM1315 474h1v1h-1zM1310 491h1v1h-1zM1267 439h1.3v1.3h-1.3zM1570 448h1.3v1.3h-1.3zM1499 470h1v1h-1zM1361 461h1.3v1.3h-1.3zM1215 521h1v1h-1zM1349 458h1v1h-1zM1314 512h1v1h-1zM1502 456h1v1h-1zM1255 498h1v1h-1zM1471 494h1.3v1.3h-1.3zM1367 431h1v1h-1zM1593 471h1v1h-1zM1476 507h1v1h-1zM1511 525h1v1h-1zM1301 521h1v1h-1zM1546 491h1v1h-1zM1538 505h1v1h-1zM1220 527h1v1h-1zM1515 500h1v1h-1zM1363 468h1.3v1.3h-1.3zM1202 416h1v1h-1zM1287 508h1v1h-1zM1244 513h1v1h-1zM1480 480h1v1h-1zM1465 494h1.3v1.3h-1.3zM1504 484h1.3v1.3h-1.3zM1564 471h1v1h-1zM1508 499h1v1h-1zM1543 485h1.3v1.3h-1.3zM1334 460h1v1h-1zM1343 532h1.3v1.3h-1.3zM1464 520h1v1h-1zM1565 438h1v1h-1zM1266 477h1v1h-1zM1506 425h1.3v1.3h-1.3zM1216 499h1.3v1.3h-1.3zM1311 483h1v1h-1zM1532 482h1v1h-1zM1572 526h1v1h-1zM1409 449h1v1h-1zM1346 530h1v1h-1zM1314 422h1.3v1.3h-1.3zM1499 539h1v1h-1zM1215 507h1v1h-1zM1185 538h1v1h-1zM1588 524h1.3v1.3h-1.3zM1493 451h1.3v1.3h-1.3zM1447 517h1.3v1.3h-1.3zM1565 531h1.3v1.3h-1.3zM1500 425h1v1h-1zM1324 534h1v1h-1zM1338 450h1v1h-1zM1487 454h1.3v1.3h-1.3zM1252 541h1v1h-1zM1325 500h1v1h-1zM1493 517h1v1h-1zM1326 474h1v1h-1zM1517 537h1v1h-1zM1266 476h1v1h-1zM1529 448h1v1h-1zM1575 482h1.3v1.3h-1.3zM1399 489h1v1h-1zM1516 505h1v1h-1zM1577 470h1.3v1.3h-1.3zM1516 521h1v1h-1zM1227 486h1.3v1.3h-1.3zM1440 433h1.3v1.3h-1.3zM1563 509h1v1h-1zM1255 527h1v1h-1zM1449 538h1.3v1.3h-1.3zM1446 425h1v1h-1zM1209 473h1v1h-1zM1227 529h1.3v1.3h-1.3zM1446 447h1v1h-1zM1371 423h1v1h-1zM1503 539h1v1h-1zM1269 465h1v1h-1zM1265 488h1v1h-1zM1366 392h1v1h-1zM1270 515h1v1h-1zM1591 545h1v1h-1zM1527 512h1v1h-1zM1258 501h1v1h-1zM1379 545h1v1h-1zM1217 527h1v1h-1zM1593 460h1v1h-1z" fill="#d4cfee" fill-opacity="0.35"/>
<path d="M1399 541h1.3v1.3h-1.3zM1579 533h1.3v1.3h-1.3zM1450 417h1.3v1.3h-1.3zM1476 520h1v1h-1zM1445 500h1v1h-1zM1554 472h1v1h-1zM1509 532h1v1h-1zM1444 501h1v1h-1zM1219 476h1v1h-1zM1245 534h1.3v1.3h-1.3zM1198 534h1v1h-1zM1403 480h1v1h-1zM1209 530h1v1h-1zM1236 431h1v1h-1zM1473 485h1.3v1.3h-1.3zM1559 535h1.3v1.3h-1.3zM1252 432h1v1h-1zM1305 472h1.3v1.3h-1.3zM1285 507h1v1h-1zM1434 414h1v1h-1zM1519 447h1.3v1.3h-1.3zM1353 427h1.3v1.3h-1.3zM1235 461h1v1h-1zM1332 492h1.3v1.3h-1.3zM1302 484h1.3v1.3h-1.3zM1366 526h1v1h-1zM1315 437h1.3v1.3h-1.3zM1367 543h1.3v1.3h-1.3zM1312 462h1.3v1.3h-1.3zM1485 510h1v1h-1zM1390 446h1.3v1.3h-1.3zM1426 458h1v1h-1zM1501 543h1.3v1.3h-1.3zM1545 533h1v1h-1zM1265 460h1v1h-1zM1460 523h1v1h-1zM1279 519h1v1h-1zM1578 473h1.3v1.3h-1.3zM1341 521h1.3v1.3h-1.3zM1584 464h1v1h-1zM1499 426h1v1h-1zM1291 514h1v1h-1zM1342 423h1.3v1.3h-1.3zM1563 428h1.3v1.3h-1.3zM1254 534h1v1h-1zM1453 409h1.3v1.3h-1.3zM1281 527h1v1h-1zM1330 487h1v1h-1zM1571 437h1.3v1.3h-1.3zM1364 480h1v1h-1zM1345 524h1v1h-1zM1452 524h1.3v1.3h-1.3zM1295 423h1v1h-1zM1192 494h1v1h-1zM1211 489h1v1h-1zM1556 457h1v1h-1zM1267 451h1v1h-1zM1265 528h1v1h-1zM1472 509h1v1h-1zM1253 521h1v1h-1zM1453 490h1v1h-1zM1362 499h1v1h-1zM1330 481h1v1h-1zM1219 448h1v1h-1zM1226 524h1.3v1.3h-1.3zM1179 497h1v1h-1zM1417 426h1v1h-1zM1371 484h1.3v1.3h-1.3zM1244 438h1v1h-1zM1299 522h1v1h-1zM1561 527h1v1h-1zM1288 397h1.3v1.3h-1.3zM1220 531h1v1h-1zM1524 450h1v1h-1zM1350 417h1v1h-1zM1417 477h1v1h-1zM1432 395h1v1h-1zM1352 471h1v1h-1zM1463 491h1.3v1.3h-1.3zM1284 529h1v1h-1zM1571 463h1v1h-1zM1570 487h1.3v1.3h-1.3zM1291 496h1v1h-1zM1576 498h1v1h-1zM1561 524h1.3v1.3h-1.3zM1286 519h1v1h-1zM1492 533h1.3v1.3h-1.3zM1530 446h1.3v1.3h-1.3zM1372 449h1.3v1.3h-1.3zM1461 536h1v1h-1zM1428 475h1v1h-1zM1333 520h1v1h-1zM1404 467h1.3v1.3h-1.3zM1475 505h1.3v1.3h-1.3zM1424 478h1.3v1.3h-1.3zM1562 482h1v1h-1zM1305 526h1.3v1.3h-1.3zM1389 446h1.3v1.3h-1.3zM1389 493h1.3v1.3h-1.3zM1196 489h1.3v1.3h-1.3zM1453 531h1v1h-1zM1342 532h1.3v1.3h-1.3zM1528 456h1v1h-1zM1310 540h1.3v1.3h-1.3zM1492 494h1.3v1.3h-1.3zM1306 471h1v1h-1zM1575 508h1v1h-1zM1373 511h1v1h-1zM1233 475h1v1h-1zM1207 478h1v1h-1zM1445 500h1v1h-1zM1547 532h1v1h-1zM1245 498h1v1h-1zM1217 409h1.3v1.3h-1.3zM1515 472h1v1h-1zM1426 479h1v1h-1zM1496 456h1v1h-1zM1192 522h1v1h-1zM1532 506h1v1h-1zM1333 423h1v1h-1zM1378 483h1.3v1.3h-1.3zM1268 502h1.3v1.3h-1.3zM1302 519h1.3v1.3h-1.3zM1258 544h1v1h-1zM1198 489h1v1h-1zM1461 498h1.3v1.3h-1.3zM1418 540h1v1h-1zM1515 493h1v1h-1zM1361 475h1v1h-1zM1555 469h1v1h-1zM1315 526h1.3v1.3h-1.3zM1222 464h1v1h-1zM1440 430h1v1h-1zM1576 443h1.3v1.3h-1.3zM1553 506h1.3v1.3h-1.3zM1428 490h1v1h-1zM1414 525h1.3v1.3h-1.3zM1497 498h1.3v1.3h-1.3zM1529 506h1v1h-1zM1368 521h1v1h-1zM1302 535h1.3v1.3h-1.3zM1344 502h1v1h-1zM1416 503h1.3v1.3h-1.3zM1422 536h1v1h-1zM1372 540h1.3v1.3h-1.3zM1538 486h1v1h-1zM1399 520h1v1h-1zM1394 479h1v1h-1zM1578 497h1.3v1.3h-1.3zM1265 485h1v1h-1zM1513 522h1.3v1.3h-1.3zM1445 446h1v1h-1zM1316 527h1v1h-1zM1576 533h1v1h-1zM1479 400h1v1h-1zM1434 420h1v1h-1zM1385 458h1v1h-1zM1279 446h1.3v1.3h-1.3zM1390 521h1v1h-1zM1441 501h1v1h-1zM1414 447h1v1h-1zM1561 433h1.3v1.3h-1.3zM1291 422h1.3v1.3h-1.3zM1221 530h1v1h-1zM1541 521h1v1h-1zM1569 488h1v1h-1zM1240 525h1.3v1.3h-1.3zM1509 447h1v1h-1zM1218 521h1.3v1.3h-1.3zM1371 488h1.3v1.3h-1.3zM1461 416h1v1h-1zM1345 439h1v1h-1zM1444 527h1.3v1.3h-1.3zM1424 535h1.3v1.3h-1.3zM1391 432h1v1h-1zM1581 434h1v1h-1zM1395 497h1v1h-1zM1208 517h1.3v1.3h-1.3zM1495 520h1v1h-1zM1471 526h1.3v1.3h-1.3zM1265 503h1v1h-1zM1376 458h1v1h-1zM1584 455h1v1h-1zM1338 480h1.3v1.3h-1.3zM1527 526h1.3v1.3h-1.3zM1380 471h1v1h-1zM1438 466h1v1h-1zM1429 504h1.3v1.3h-1.3zM1221 540h1v1h-1zM1499 515h1v1h-1zM1555 543h1.3v1.3h-1.3zM1389 418h1v1h-1zM1411 506h1v1h-1zM1184 523h1.3v1.3h-1.3zM1416 431h1v1h-1zM1449 537h1.3v1.3h-1.3zM1372 478h1v1h-1zM1299 415h1v1h-1zM1525 501h1v1h-1zM1484 525h1v1h-1zM1252 504h1.3v1.3h-1.3zM1257 517h1v1h-1zM1266 465h1v1h-1zM1343 521h1v1h-1zM1260 450h1.3v1.3h-1.3zM1553 515h1.3v1.3h-1.3zM1446 500h1.3v1.3h-1.3zM1546 428h1v1h-1zM1454 454h1v1h-1zM1221 440h1.3v1.3h-1.3zM1210 520h1v1h-1zM1411 523h1v1h-1zM1216 502h1v1h-1zM1315 464h1v1h-1zM1339 531h1v1h-1zM1544 402h1v1h-1zM1221 449h1v1h-1zM1509 530h1.3v1.3h-1.3zM1221 447h1.3v1.3h-1.3zM1499 481h1.3v1.3h-1.3zM1527 523h1.3v1.3h-1.3zM1395 514h1v1h-1zM1501 530h1v1h-1zM1389 473h1v1h-1zM1428 544h1v1h-1zM1571 544h1v1h-1zM1279 536h1.3v1.3h-1.3zM1291 480h1v1h-1zM1502 506h1v1h-1zM1330 464h1.3v1.3h-1.3zM1193 481h1.3v1.3h-1.3zM1295 498h1v1h-1zM1565 521h1.3v1.3h-1.3zM1554 527h1v1h-1zM1499 522h1v1h-1zM1531 510h1v1h-1zM1215 423h1v1h-1zM1216 508h1v1h-1zM1223 493h1v1h-1zM1589 527h1v1h-1zM1316 468h1v1h-1zM1345 451h1v1h-1zM1311 523h1v1h-1zM1368 400h1v1h-1zM1531 529h1v1h-1zM1180 465h1.3v1.3h-1.3zM1266 509h1v1h-1zM1256 473h1v1h-1zM1497 410h1.3v1.3h-1.3zM1520 451h1v1h-1zM1486 472h1v1h-1zM1280 519h1v1h-1zM1324 536h1v1h-1zM1449 542h1v1h-1zM1328 522h1v1h-1zM1433 533h1.3v1.3h-1.3zM1256 534h1v1h-1zM1253 473h1.3v1.3h-1.3zM1530 536h1.3v1.3h-1.3zM1528 455h1.3v1.3h-1.3zM1222 492h1.3v1.3h-1.3zM1580 472h1v1h-1zM1182 537h1.3v1.3h-1.3zM1438 517h1v1h-1zM1514 486h1.3v1.3h-1.3zM1313 476h1.3v1.3h-1.3zM1515 494h1v1h-1zM1576 427h1.3v1.3h-1.3zM1454 463h1v1h-1zM1420 508h1v1h-1zM1534 525h1v1h-1zM1223 462h1v1h-1zM1343 449h1.3v1.3h-1.3zM1379 506h1v1h-1zM1344 529h1v1h-1zM1502 452h1.3v1.3h-1.3zM1196 527h1v1h-1zM1361 507h1.3v1.3h-1.3zM1417 436h1v1h-1zM1232 497h1.3v1.3h-1.3zM1414 522h1v1h-1zM1379 427h1.3v1.3h-1.3zM1576 529h1v1h-1zM1291 476h1.3v1.3h-1.3zM1539 450h1.3v1.3h-1.3zM1514 502h1v1h-1zM1445 543h1.3v1.3h-1.3zM1207 502h1v1h-1zM1265 435h1.3v1.3h-1.3zM1380 443h1.3v1.3h-1.3zM1485 493h1v1h-1zM1214 493h1.3v1.3h-1.3zM1448 508h1v1h-1zM1478 458h1v1h-1zM1592 504h1v1h-1zM1332 403h1v1h-1zM1343 498h1v1h-1zM1578 529h1v1h-1zM1278 498h1v1h-1zM1555 417h1v1h-1zM1317 489h1v1h-1zM1256 432h1v1h-1zM1471 423h1.3v1.3h-1.3zM1226 421h1v1h-1zM1291 511h1v1h-1zM1345 523h1v1h-1zM1410 501h1v1h-1zM1414 426h1v1h-1zM1338 511h1v1h-1zM1398 534h1.3v1.3h-1.3zM1195 540h1.3v1.3h-1.3zM1445 538h1v1h-1zM1339 499h1v1h-1zM1361 452h1.3v1.3h-1.3zM1577 389h1.3v1.3h-1.3zM1179 497h1v1h-1zM1579 544h1v1h-1zM1273 413h1v1h-1zM1476 519h1v1h-1zM1194 458h1v1h-1zM1366 497h1v1h-1zM1427 453h1.3v1.3h-1.3zM1584 502h1.3v1.3h-1.3zM1365 528h1v1h-1zM1214 495h1.3v1.3h-1.3zM1531 472h1v1h-1zM1185 517h1v1h-1zM1373 536h1v1h-1zM1232 510h1.3v1.3h-1.3zM1309 448h1v1h-1zM1450 506h1v1h-1zM1555 535h1v1h-1zM1310 543h1.3v1.3h-1.3zM1191 538h1v1h-1zM1390 535h1v1h-1zM1530 524h1v1h-1zM1421 466h1v1h-1zM1384 507h1v1h-1zM1258 465h1v1h-1zM1310 464h1.3v1.3h-1.3zM1380 518h1v1h-1zM1314 499h1.3v1.3h-1.3zM1528 474h1v1h-1zM1555 526h1.3v1.3h-1.3zM1274 541h1.3v1.3h-1.3zM1343 523h1v1h-1zM1462 515h1v1h-1zM1555 434h1v1h-1zM1509 545h1.3v1.3h-1.3zM1209 509h1.3v1.3h-1.3zM1284 480h1v1h-1zM1334 536h1.3v1.3h-1.3zM1314 536h1v1h-1zM1366 525h1v1h-1zM1301 407h1v1h-1zM1304 511h1v1h-1zM1575 467h1v1h-1zM1568 450h1v1h-1zM1530 446h1v1h-1zM1446 516h1.3v1.3h-1.3zM1251 501h1v1h-1zM1418 519h1.3v1.3h-1.3zM1469 485h1.3v1.3h-1.3zM1271 480h1v1h-1zM1435 459h1.3v1.3h-1.3zM1501 508h1v1h-1zM1434 474h1v1h-1zM1511 463h1.3v1.3h-1.3zM1191 492h1.3v1.3h-1.3zM1345 505h1v1h-1zM1526 517h1.3v1.3h-1.3zM1343 539h1.3v1.3h-1.3zM1209 538h1v1h-1zM1209 539h1.3v1.3h-1.3zM1360 430h1.3v1.3h-1.3zM1306 426h1v1h-1zM1315 511h1.3v1.3h-1.3zM1458 484h1v1h-1zM1581 451h1.3v1.3h-1.3zM1378 480h1.3v1.3h-1.3zM1369 490h1v1h-1zM1352 458h1v1h-1zM1526 439h1.3v1.3h-1.3zM1311 436h1.3v1.3h-1.3zM1297 530h1.3v1.3h-1.3zM1334 423h1v1h-1zM1228 410h1v1h-1zM1339 534h1v1h-1zM1433 538h1v1h-1zM1563 494h1v1h-1zM1414 533h1.3v1.3h-1.3zM1267 475h1v1h-1zM1210 477h1v1h-1zM1482 399h1.3v1.3h-1.3zM1589 512h1v1h-1zM1498 504h1v1h-1zM1291 450h1v1h-1zM1494 500h1v1h-1zM1262 398h1v1h-1zM1397 529h1v1h-1zM1354 513h1v1h-1zM1573 489h1v1h-1zM1386 410h1v1h-1zM1186 480h1v1h-1zM1482 532h1v1h-1zM1581 541h1.3v1.3h-1.3zM1491 523h1v1h-1zM1389 491h1v1h-1zM1418 463h1v1h-1zM1309 522h1v1h-1zM1256 475h1v1h-1zM1387 544h1v1h-1zM1511 469h1.3v1.3h-1.3zM1386 503h1.3v1.3h-1.3zM1279 523h1.3v1.3h-1.3zM1562 490h1.3v1.3h-1.3zM1444 426h1v1h-1zM1424 526h1.3v1.3h-1.3zM1333 524h1v1h-1zM1450 497h1v1h-1zM1217 497h1.3v1.3h-1.3zM1371 537h1.3v1.3h-1.3zM1487 539h1v1h-1zM1585 480h1.3v1.3h-1.3zM1580 528h1.3v1.3h-1.3zM1210 497h1v1h-1zM1216 483h1v1h-1zM1253 510h1.3v1.3h-1.3zM1421 418h1v1h-1zM1496 449h1v1h-1zM1531 405h1v1h-1zM1591 447h1v1h-1zM1267 535h1v1h-1zM1412 483h1v1h-1zM1582 525h1v1h-1zM1353 495h1v1h-1zM1556 429h1v1h-1zM1419 542h1v1h-1zM1397 500h1v1h-1zM1495 538h1v1h-1zM1439 444h1v1h-1zM1556 471h1v1h-1zM1586 503h1.3v1.3h-1.3zM1444 540h1.3v1.3h-1.3zM1298 406h1v1h-1zM1315 529h1v1h-1zM1396 455h1.3v1.3h-1.3zM1520 495h1v1h-1zM1362 463h1v1h-1zM1399 479h1v1h-1zM1203 535h1.3v1.3h-1.3zM1557 426h1v1h-1zM1512 418h1v1h-1zM1504 504h1v1h-1zM1343 531h1.3v1.3h-1.3zM1555 543h1v1h-1zM1203 540h1v1h-1zM1513 411h1v1h-1zM1340 535h1v1h-1zM1562 527h1.3v1.3h-1.3zM1420 441h1.3v1.3h-1.3zM1185 516h1v1h-1zM1303 479h1v1h-1zM1439 451h1.3v1.3h-1.3zM1273 529h1v1h-1zM1402 510h1.3v1.3h-1.3zM1209 506h1v1h-1zM1463 532h1.3v1.3h-1.3zM1514 457h1v1h-1zM1218 529h1v1h-1zM1317 469h1v1h-1zM1545 519h1v1h-1zM1552 487h1v1h-1zM1411 452h1v1h-1zM1209 522h1.3v1.3h-1.3zM1530 536h1v1h-1zM1221 434h1.3v1.3h-1.3zM1305 532h1v1h-1zM1343 518h1v1h-1zM1526 521h1.3v1.3h-1.3zM1466 447h1.3v1.3h-1.3zM1212 534h1v1h-1zM1353 538h1v1h-1zM1586 478h1v1h-1zM1475 540h1v1h-1zM1344 485h1.3v1.3h-1.3zM1290 515h1.3v1.3h-1.3zM1332 515h1v1h-1zM1443 519h1v1h-1zM1434 491h1.3v1.3h-1.3zM1592 456h1.3v1.3h-1.3zM1420 461h1.3v1.3h-1.3zM1556 449h1.3v1.3h-1.3zM1309 472h1.3v1.3h-1.3zM1398 521h1v1h-1zM1352 452h1.3v1.3h-1.3zM1267 514h1v1h-1zM1305 478h1v1h-1zM1253 463h1v1h-1zM1209 515h1v1h-1zM1416 520h1v1h-1zM1390 477h1.3v1.3h-1.3zM1498 451h1v1h-1zM1417 490h1.3v1.3h-1.3zM1454 525h1.3v1.3h-1.3zM1204 525h1.3v1.3h-1.3zM1279 461h1v1h-1zM1300 470h1.3v1.3h-1.3zM1508 446h1v1h-1zM1342 443h1.3v1.3h-1.3zM1363 494h1v1h-1zM1579 505h1v1h-1zM1314 540h1.3v1.3h-1.3zM1390 462h1v1h-1zM1274 434h1v1h-1zM1514 449h1v1h-1zM1385 533h1v1h-1zM1204 513h1v1h-1zM1257 477h1v1h-1zM1241 540h1v1h-1zM1215 408h1.3v1.3h-1.3zM1405 439h1.3v1.3h-1.3zM1286 520h1v1h-1zM1440 416h1.3v1.3h-1.3zM1222 537h1v1h-1zM1276 456h1.3v1.3h-1.3zM1374 484h1.3v1.3h-1.3zM1288 472h1v1h-1zM1273 469h1v1h-1zM1210 515h1v1h-1zM1494 460h1v1h-1zM1365 538h1.3v1.3h-1.3zM1299 533h1.3v1.3h-1.3zM1342 393h1v1h-1zM1388 506h1v1h-1zM1445 506h1v1h-1zM1466 504h1v1h-1zM1472 527h1.3v1.3h-1.3zM1581 428h1.3v1.3h-1.3zM1241 495h1v1h-1zM1339 485h1v1h-1zM1372 538h1v1h-1zM1349 408h1v1h-1zM1445 537h1v1h-1zM1565 512h1v1h-1zM1421 459h1v1h-1zM1428 391h1v1h-1zM1372 448h1.3v1.3h-1.3zM1352 479h1.3v1.3h-1.3zM1411 459h1.3v1.3h-1.3zM1233 508h1.3v1.3h-1.3zM1279 506h1.3v1.3h-1.3zM1374 484h1.3v1.3h-1.3zM1582 456h1.3v1.3h-1.3zM1528 450h1v1h-1zM1307 528h1v1h-1zM1268 541h1v1h-1zM1213 528h1v1h-1zM1562 480h1v1h-1zM1412 523h1v1h-1zM1405 427h1v1h-1zM1444 459h1v1h-1zM1339 482h1v1h-1zM1580 530h1v1h-1zM1269 521h1.3v1.3h-1.3zM1253 526h1v1h-1zM1397 542h1.3v1.3h-1.3zM1555 476h1v1h-1zM1309 414h1v1h-1zM1576 541h1v1h-1zM1204 403h1v1h-1zM1345 543h1v1h-1zM1343 494h1.3v1.3h-1.3zM1457 492h1v1h-1zM1288 508h1.3v1.3h-1.3zM1444 480h1.3v1.3h-1.3zM1508 511h1.3v1.3h-1.3zM1475 459h1v1h-1zM1527 488h1.3v1.3h-1.3zM1437 508h1.3v1.3h-1.3zM1291 499h1v1h-1zM1191 514h1v1h-1zM1259 473h1.3v1.3h-1.3zM1513 481h1v1h-1zM1526 432h1.3v1.3h-1.3zM1560 479h1v1h-1zM1207 494h1v1h-1zM1259 487h1v1h-1zM1471 478h1v1h-1zM1586 527h1v1h-1zM1443 526h1v1h-1zM1520 490h1.3v1.3h-1.3zM1274 511h1v1h-1zM1593 514h1.3v1.3h-1.3zM1260 509h1v1h-1zM1302 538h1v1h-1zM1410 500h1v1h-1zM1518 515h1.3v1.3h-1.3zM1268 492h1v1h-1zM1254 481h1v1h-1zM1570 541h1.3v1.3h-1.3zM1316 523h1v1h-1zM1255 433h1.3v1.3h-1.3zM1286 424h1v1h-1zM1266 545h1v1h-1zM1446 464h1.3v1.3h-1.3zM1455 520h1v1h-1zM1391 455h1v1h-1zM1298 430h1v1h-1zM1585 463h1.3v1.3h-1.3zM1305 456h1.3v1.3h-1.3zM1469 484h1v1h-1zM1510 541h1v1h-1zM1258 487h1v1h-1zM1362 531h1.3v1.3h-1.3zM1529 543h1.3v1.3h-1.3zM1466 463h1v1h-1zM1332 419h1.3v1.3h-1.3zM1435 469h1.3v1.3h-1.3zM1416 488h1.3v1.3h-1.3zM1518 543h1v1h-1zM1516 543h1v1h-1zM1266 398h1v1h-1zM1179 475h1v1h-1zM1267 487h1v1h-1zM1310 525h1v1h-1zM1364 442h1v1h-1zM1315 447h1v1h-1zM1267 498h1v1h-1zM1538 523h1v1h-1zM1480 509h1v1h-1zM1551 496h1v1h-1zM1304 483h1.3v1.3h-1.3zM1369 539h1v1h-1zM1394 474h1.3v1.3h-1.3zM1377 536h1v1h-1zM1492 534h1v1h-1zM1389 440h1.3v1.3h-1.3zM1180 463h1.3v1.3h-1.3zM1258 527h1.3v1.3h-1.3zM1450 504h1v1h-1zM1477 449h1v1h-1zM1232 456h1.3v1.3h-1.3zM1519 516h1v1h-1zM1295 477h1.3v1.3h-1.3zM1228 532h1v1h-1zM1446 491h1.3v1.3h-1.3zM1529 508h1.3v1.3h-1.3zM1234 475h1.3v1.3h-1.3zM1490 425h1v1h-1zM1474 537h1v1h-1zM1568 499h1v1h-1zM1530 464h1v1h-1zM1266 456h1v1h-1zM1497 461h1.3v1.3h-1.3zM1267 450h1v1h-1zM1529 492h1v1h-1zM1245 533h1v1h-1zM1372 495h1v1h-1zM1530 530h1v1h-1zM1576 425h1v1h-1zM1411 532h1.3v1.3h-1.3zM1527 526h1.3v1.3h-1.3zM1333 456h1v1h-1zM1367 489h1v1h-1zM1220 469h1v1h-1zM1191 528h1.3v1.3h-1.3zM1449 500h1v1h-1zM1507 518h1v1h-1zM1535 533h1.3v1.3h-1.3zM1407 504h1v1h-1zM1530 518h1v1h-1zM1576 496h1.3v1.3h-1.3zM1209 511h1.3v1.3h-1.3zM1251 533h1v1h-1zM1525 515h1v1h-1zM1305 536h1v1h-1zM1363 522h1v1h-1zM1590 492h1v1h-1zM1591 421h1.3v1.3h-1.3zM1490 528h1v1h-1zM1374 499h1.3v1.3h-1.3zM1513 495h1.3v1.3h-1.3zM1418 510h1v1h-1zM1294 476h1.3v1.3h-1.3zM1301 458h1.3v1.3h-1.3zM1555 481h1v1h-1zM1471 502h1v1h-1zM1490 467h1.3v1.3h-1.3zM1281 528h1v1h-1zM1446 525h1v1h-1zM1440 536h1.3v1.3h-1.3zM1345 468h1v1h-1zM1421 499h1v1h-1zM1274 476h1v1h-1zM1354 515h1v1h-1zM1582 523h1v1h-1zM1539 534h1v1h-1zM1313 495h1v1h-1zM1348 443h1v1h-1zM1268 470h1v1h-1zM1498 522h1v1h-1zM1257 523h1.3v1.3h-1.3zM1487 500h1.3v1.3h-1.3zM1561 521h1v1h-1zM1412 529h1v1h-1zM1411 493h1v1h-1zM1445 512h1v1h-1zM1394 499h1v1h-1zM1506 441h1.3v1.3h-1.3zM1295 417h1v1h-1zM1547 497h1.3v1.3h-1.3zM1488 520h1v1h-1zM1186 498h1.3v1.3h-1.3zM1210 487h1.3v1.3h-1.3zM1429 532h1.3v1.3h-1.3zM1445 482h1v1h-1zM1274 450h1.3v1.3h-1.3zM1385 473h1.3v1.3h-1.3zM1466 543h1v1h-1zM1309 448h1.3v1.3h-1.3zM1444 417h1v1h-1zM1592 462h1.3v1.3h-1.3zM1216 533h1v1h-1zM1511 519h1v1h-1zM1445 497h1.3v1.3h-1.3zM1461 450h1.3v1.3h-1.3zM1400 501h1v1h-1zM1546 459h1v1h-1zM1589 526h1v1h-1zM1376 429h1.3v1.3h-1.3zM1367 426h1.3v1.3h-1.3zM1531 514h1v1h-1zM1419 534h1v1h-1zM1509 466h1v1h-1zM1348 523h1v1h-1zM1304 530h1v1h-1zM1482 481h1v1h-1zM1496 413h1.3v1.3h-1.3zM1503 457h1v1h-1zM1579 396h1v1h-1zM1437 466h1.3v1.3h-1.3zM1266 494h1v1h-1zM1555 464h1.3v1.3h-1.3zM1478 495h1.3v1.3h-1.3zM1554 527h1v1h-1zM1285 509h1v1h-1zM1482 471h1.3v1.3h-1.3zM1285 494h1.3v1.3h-1.3zM1368 541h1v1h-1zM1568 481h1v1h-1zM1235 517h1v1h-1zM1499 543h1.3v1.3h-1.3zM1208 488h1v1h-1zM1207 408h1v1h-1zM1330 541h1v1h-1zM1502 537h1v1h-1zM1222 507h1v1h-1zM1511 464h1v1h-1zM1316 544h1.3v1.3h-1.3zM1588 464h1v1h-1zM1450 496h1.3v1.3h-1.3zM1490 500h1.3v1.3h-1.3zM1266 455h1v1h-1zM1564 481h1v1h-1zM1339 474h1.3v1.3h-1.3zM1188 501h1v1h-1zM1184 482h1v1h-1zM1305 486h1v1h-1zM1503 439h1v1h-1zM1373 498h1v1h-1zM1205 525h1v1h-1zM1282 535h1v1h-1zM1402 510h1v1h-1zM1228 543h1.3v1.3h-1.3zM1304 530h1v1h-1zM1319 480h1.3v1.3h-1.3zM1332 524h1v1h-1zM1463 545h1.3v1.3h-1.3zM1337 471h1v1h-1zM1389 481h1v1h-1zM1267 510h1v1h-1zM1343 437h1.3v1.3h-1.3zM1208 533h1v1h-1zM1335 506h1v1h-1zM1591 482h1v1h-1zM1404 456h1.3v1.3h-1.3zM1186 529h1v1h-1zM1220 448h1v1h-1zM1209 456h1v1h-1zM1203 530h1v1h-1zM1279 531h1.3v1.3h-1.3zM1258 472h1v1h-1zM1545 450h1.3v1.3h-1.3zM1423 444h1.3v1.3h-1.3zM1184 534h1.3v1.3h-1.3zM1289 438h1v1h-1zM1338 489h1.3v1.3h-1.3zM1446 538h1v1h-1zM1376 455h1v1h-1zM1225 460h1v1h-1zM1207 492h1v1h-1zM1592 527h1.3v1.3h-1.3zM1585 543h1.3v1.3h-1.3zM1530 436h1v1h-1zM1243 458h1v1h-1zM1208 442h1v1h-1zM1489 482h1.3v1.3h-1.3zM1501 524h1.3v1.3h-1.3zM1528 473h1.3v1.3h-1.3zM1304 536h1v1h-1zM1266 466h1v1h-1zM1403 502h1.3v1.3h-1.3zM1313 517h1.3v1.3h-1.3zM1459 526h1.3v1.3h-1.3zM1267 517h1v1h-1zM1257 432h1.3v1.3h-1.3zM1361 498h1v1h-1zM1367 533h1.3v1.3h-1.3zM1342 448h1v1h-1zM1415 523h1v1h-1zM1265 512h1v1h-1zM1420 474h1v1h-1zM1307 516h1.3v1.3h-1.3zM1592 404h1.3v1.3h-1.3zM1523 525h1.3v1.3h-1.3zM1441 522h1.3v1.3h-1.3zM1383 540h1.3v1.3h-1.3zM1267 480h1v1h-1zM1445 534h1.3v1.3h-1.3zM1514 445h1v1h-1zM1493 515h1.3v1.3h-1.3zM1529 471h1.3v1.3h-1.3zM1416 468h1.3v1.3h-1.3zM1291 503h1v1h-1zM1518 466h1v1h-1zM1310 430h1v1h-1zM1286 502h1v1h-1zM1468 497h1v1h-1zM1499 461h1v1h-1zM1344 492h1v1h-1zM1365 465h1v1h-1zM1528 491h1.3v1.3h-1.3zM1298 539h1v1h-1zM1516 537h1v1h-1zM1530 499h1.3v1.3h-1.3zM1351 489h1v1h-1zM1326 491h1v1h-1zM1585 526h1v1h-1zM1392 521h1v1h-1zM1353 541h1v1h-1zM1244 448h1v1h-1zM1298 459h1v1h-1z" fill="#d4cfee" fill-opacity="0.6"/>
<path d="M1257 486h1v1h-1zM1278 498h1v1h-1zM1529 457h1.3v1.3h-1.3zM1388 487h1v1h-1zM1361 519h1v1h-1zM1586 403h1.3v1.3h-1.3zM1401 512h1v1h-1zM1445 407h1.3v1.3h-1.3zM1533 536h1v1h-1zM1376 436h1v1h-1zM1253 522h1.3v1.3h-1.3zM1511 462h1.3v1.3h-1.3zM1563 400h1v1h-1zM1497 507h1v1h-1zM1507 545h1v1h-1zM1266 443h1v1h-1zM1373 542h1.3v1.3h-1.3zM1454 494h1.3v1.3h-1.3zM1215 493h1v1h-1zM1331 447h1.3v1.3h-1.3zM1309 486h1.3v1.3h-1.3zM1380 493h1.3v1.3h-1.3zM1576 487h1v1h-1zM1354 452h1v1h-1zM1591 527h1v1h-1zM1371 481h1v1h-1zM1227 511h1v1h-1zM1566 476h1v1h-1zM1529 526h1v1h-1zM1411 458h1v1h-1zM1343 530h1v1h-1zM1251 468h1v1h-1zM1533 450h1v1h-1zM1593 415h1.3v1.3h-1.3zM1442 542h1v1h-1zM1467 476h1v1h-1zM1470 538h1v1h-1zM1305 443h1v1h-1zM1266 544h1.3v1.3h-1.3zM1332 452h1v1h-1zM1220 537h1v1h-1zM1268 508h1.3v1.3h-1.3zM1454 423h1v1h-1zM1411 489h1.3v1.3h-1.3zM1341 500h1.3v1.3h-1.3zM1575 438h1v1h-1zM1180 450h1v1h-1zM1266 504h1v1h-1zM1264 526h1v1h-1zM1240 487h1v1h-1zM1300 503h1v1h-1zM1209 464h1v1h-1zM1578 536h1v1h-1zM1410 513h1.3v1.3h-1.3zM1546 536h1v1h-1zM1216 522h1v1h-1zM1434 494h1v1h-1zM1519 413h1v1h-1zM1440 513h1.3v1.3h-1.3zM1366 479h1v1h-1zM1332 543h1.3v1.3h-1.3zM1529 523h1v1h-1zM1315 505h1.3v1.3h-1.3zM1255 510h1v1h-1zM1258 527h1v1h-1zM1370 474h1v1h-1zM1508 447h1v1h-1zM1366 530h1v1h-1zM1422 521h1v1h-1zM1291 526h1.3v1.3h-1.3zM1233 497h1v1h-1zM1180 462h1.3v1.3h-1.3zM1205 408h1v1h-1zM1512 542h1v1h-1zM1345 535h1v1h-1zM1593 435h1v1h-1zM1300 531h1.3v1.3h-1.3zM1291 438h1v1h-1zM1217 471h1.3v1.3h-1.3zM1380 479h1v1h-1zM1488 478h1.3v1.3h-1.3zM1404 543h1v1h-1zM1529 497h1v1h-1zM1588 421h1v1h-1zM1417 466h1.3v1.3h-1.3zM1525 494h1v1h-1zM1311 403h1v1h-1zM1351 490h1v1h-1zM1592 491h1.3v1.3h-1.3zM1333 438h1.3v1.3h-1.3zM1413 423h1v1h-1zM1180 440h1v1h-1zM1359 478h1v1h-1zM1353 521h1.3v1.3h-1.3zM1366 495h1v1h-1zM1316 459h1v1h-1zM1315 493h1v1h-1zM1492 532h1v1h-1zM1245 484h1v1h-1zM1185 427h1v1h-1zM1567 421h1v1h-1zM1305 481h1v1h-1zM1466 542h1v1h-1zM1305 462h1v1h-1zM1365 466h1v1h-1zM1244 470h1.3v1.3h-1.3zM1578 475h1v1h-1zM1372 446h1v1h-1zM1581 497h1v1h-1zM1483 390h1.3v1.3h-1.3zM1221 429h1v1h-1zM1530 461h1v1h-1zM1467 533h1v1h-1zM1236 540h1v1h-1zM1188 524h1v1h-1zM1326 439h1v1h-1zM1411 481h1v1h-1zM1473 504h1v1h-1zM1422 541h1v1h-1zM1497 537h1.3v1.3h-1.3zM1514 462h1v1h-1zM1259 401h1v1h-1zM1555 474h1v1h-1zM1499 543h1v1h-1zM1577 518h1v1h-1zM1371 517h1v1h-1zM1501 538h1v1h-1zM1259 481h1.3v1.3h-1.3zM1385 544h1v1h-1zM1209 453h1v1h-1zM1380 422h1v1h-1zM1299 495h1.3v1.3h-1.3zM1389 544h1.3v1.3h-1.3zM1378 503h1v1h-1zM1408 425h1v1h-1zM1527 488h1v1h-1zM1192 468h1.3v1.3h-1.3zM1233 460h1v1h-1zM1588 529h1v1h-1zM1298 424h1v1h-1zM1458 533h1v1h-1zM1591 460h1v1h-1zM1219 529h1v1h-1zM1220 526h1v1h-1zM1218 481h1v1h-1zM1569 469h1.3v1.3h-1.3zM1507 442h1v1h-1zM1279 446h1v1h-1zM1389 510h1v1h-1zM1422 448h1.3v1.3h-1.3zM1214 485h1.3v1.3h-1.3zM1342 530h1v1h-1zM1572 487h1v1h-1zM1379 452h1v1h-1zM1339 504h1.3v1.3h-1.3zM1472 410h1v1h-1zM1303 537h1.3v1.3h-1.3zM1236 455h1v1h-1zM1368 461h1.3v1.3h-1.3zM1591 450h1v1h-1zM1366 483h1v1h-1zM1252 430h1.3v1.3h-1.3zM1280 465h1v1h-1zM1517 532h1v1h-1zM1576 544h1v1h-1zM1288 544h1v1h-1zM1338 509h1v1h-1zM1187 497h1v1h-1zM1562 520h1.3v1.3h-1.3zM1551 540h1.3v1.3h-1.3zM1485 544h1v1h-1zM1523 410h1.3v1.3h-1.3zM1266 527h1.3v1.3h-1.3zM1291 522h1.3v1.3h-1.3zM1279 488h1v1h-1zM1286 459h1v1h-1zM1332 504h1.3v1.3h-1.3zM1528 522h1v1h-1zM1232 503h1.3v1.3h-1.3zM1267 478h1.3v1.3h-1.3zM1481 459h1v1h-1zM1507 499h1v1h-1zM1408 542h1v1h-1zM1501 523h1.3v1.3h-1.3zM1267 535h1.3v1.3h-1.3zM1481 405h1v1h-1zM1538 451h1v1h-1zM1529 528h1v1h-1zM1554 428h1.3v1.3h-1.3zM1284 508h1.3v1.3h-1.3zM1318 474h1.3v1.3h-1.3zM1399 509h1.3v1.3h-1.3zM1424 425h1v1h-1zM1192 468h1v1h-1zM1468 510h1.3v1.3h-1.3zM1228 426h1.3v1.3h-1.3zM1340 519h1.3v1.3h-1.3zM1345 521h1v1h-1zM1196 517h1v1h-1zM1548 541h1.3v1.3h-1.3zM1345 500h1v1h-1zM1353 406h1v1h-1zM1253 402h1v1h-1zM1259 454h1v1h-1zM1341 530h1.3v1.3h-1.3zM1404 485h1.3v1.3h-1.3zM1539 457h1v1h-1zM1368 528h1v1h-1zM1368 498h1v1h-1zM1210 506h1v1h-1zM1341 446h1v1h-1zM1411 389h1.3v1.3h-1.3zM1361 457h1v1h-1zM1391 488h1.3v1.3h-1.3zM1365 489h1v1h-1zM1454 484h1v1h-1zM1344 491h1.3v1.3h-1.3zM1508 443h1v1h-1zM1527 478h1v1h-1zM1560 540h1v1h-1zM1215 498h1.3v1.3h-1.3zM1232 527h1v1h-1zM1208 491h1v1h-1zM1440 531h1.3v1.3h-1.3zM1584 420h1v1h-1zM1397 491h1v1h-1zM1282 496h1.3v1.3h-1.3zM1370 496h1v1h-1zM1498 456h1v1h-1zM1444 420h1.3v1.3h-1.3zM1475 481h1v1h-1zM1530 474h1v1h-1zM1383 485h1v1h-1zM1577 535h1v1h-1zM1386 533h1.3v1.3h-1.3zM1399 507h1v1h-1zM1357 495h1.3v1.3h-1.3zM1505 505h1.3v1.3h-1.3zM1280 497h1v1h-1zM1529 514h1.3v1.3h-1.3zM1369 464h1.3v1.3h-1.3zM1404 471h1.3v1.3h-1.3zM1267 540h1.3v1.3h-1.3zM1299 507h1v1h-1zM1534 542h1v1h-1zM1434 471h1v1h-1zM1302 464h1v1h-1zM1374 438h1v1h-1zM1225 412h1v1h-1zM1440 475h1v1h-1zM1394 402h1.3v1.3h-1.3zM1556 484h1v1h-1zM1320 473h1v1h-1zM1364 542h1v1h-1zM1496 485h1.3v1.3h-1.3zM1258 445h1.3v1.3h-1.3zM1303 428h1v1h-1zM1305 501h1v1h-1zM1343 441h1.3v1.3h-1.3zM1585 465h1.3v1.3h-1.3zM1520 515h1.3v1.3h-1.3zM1218 441h1v1h-1zM1592 522h1.3v1.3h-1.3zM1229 446h1v1h-1zM1202 450h1v1h-1zM1338 510h1v1h-1zM1535 419h1v1h-1zM1497 457h1v1h-1zM1588 497h1v1h-1zM1514 521h1.3v1.3h-1.3zM1365 457h1v1h-1zM1216 531h1v1h-1zM1585 521h1.3v1.3h-1.3zM1449 515h1v1h-1zM1578 459h1v1h-1zM1291 521h1v1h-1zM1287 420h1.3v1.3h-1.3zM1282 543h1v1h-1zM1265 404h1.3v1.3h-1.3zM1364 543h1v1h-1zM1235 455h1.3v1.3h-1.3zM1561 493h1v1h-1zM1591 530h1v1h-1zM1489 450h1v1h-1zM1259 451h1v1h-1zM1526 465h1v1h-1zM1474 484h1v1h-1zM1479 531h1v1h-1zM1305 531h1v1h-1zM1530 528h1.3v1.3h-1.3zM1241 449h1.3v1.3h-1.3zM1244 465h1.3v1.3h-1.3zM1497 542h1v1h-1zM1482 504h1v1h-1zM1387 479h1v1h-1zM1290 496h1v1h-1zM1414 469h1v1h-1zM1267 543h1v1h-1zM1386 421h1v1h-1zM1303 535h1v1h-1zM1196 459h1.3v1.3h-1.3zM1309 473h1v1h-1zM1429 443h1v1h-1zM1399 497h1v1h-1zM1444 468h1v1h-1zM1513 466h1v1h-1zM1496 529h1.3v1.3h-1.3zM1211 442h1v1h-1zM1333 507h1.3v1.3h-1.3zM1380 449h1v1h-1zM1278 478h1v1h-1zM1212 516h1.3v1.3h-1.3zM1590 536h1v1h-1zM1216 534h1v1h-1zM1362 524h1.3v1.3h-1.3zM1255 539h1v1h-1zM1440 498h1v1h-1zM1585 520h1v1h-1zM1440 429h1.3v1.3h-1.3zM1466 416h1v1h-1zM1214 429h1v1h-1zM1580 485h1v1h-1zM1527 412h1v1h-1zM1227 512h1v1h-1zM1380 452h1v1h-1zM1345 441h1v1h-1zM1273 516h1v1h-1zM1190 408h1.3v1.3h-1.3zM1421 545h1v1h-1zM1255 470h1v1h-1zM1302 509h1.3v1.3h-1.3zM1186 533h1.3v1.3h-1.3zM1567 422h1.3v1.3h-1.3zM1581 422h1.3v1.3h-1.3zM1389 538h1v1h-1zM1498 506h1v1h-1zM1390 408h1.3v1.3h-1.3zM1458 500h1v1h-1zM1455 517h1.3v1.3h-1.3zM1365 447h1v1h-1zM1467 397h1.3v1.3h-1.3zM1290 521h1v1h-1zM1386 535h1.3v1.3h-1.3zM1178 488h1v1h-1zM1581 480h1v1h-1zM1345 509h1v1h-1zM1250 424h1.3v1.3h-1.3zM1555 539h1v1h-1zM1246 513h1v1h-1zM1338 451h1.3v1.3h-1.3zM1389 472h1.3v1.3h-1.3zM1201 480h1v1h-1zM1508 509h1v1h-1zM1267 515h1v1h-1zM1545 524h1.3v1.3h-1.3zM1347 486h1v1h-1zM1227 518h1v1h-1zM1305 522h1.3v1.3h-1.3zM1446 494h1v1h-1zM1368 542h1v1h-1zM1506 530h1.3v1.3h-1.3zM1321 501h1v1h-1zM1370 483h1v1h-1zM1590 482h1.3v1.3h-1.3zM1201 518h1.3v1.3h-1.3zM1301 513h1v1h-1zM1357 508h1.3v1.3h-1.3zM1265 510h1v1h-1zM1423 540h1.3v1.3h-1.3zM1339 446h1.3v1.3h-1.3zM1372 535h1.3v1.3h-1.3zM1511 508h1.3v1.3h-1.3zM1204 503h1v1h-1zM1390 495h1.3v1.3h-1.3zM1544 492h1v1h-1zM1306 538h1.3v1.3h-1.3zM1333 494h1v1h-1zM1446 467h1v1h-1zM1567 483h1v1h-1zM1297 526h1v1h-1zM1404 436h1v1h-1zM1342 445h1v1h-1zM1379 520h1.3v1.3h-1.3zM1291 542h1.3v1.3h-1.3zM1316 448h1v1h-1zM1569 452h1v1h-1zM1214 433h1v1h-1zM1461 490h1.3v1.3h-1.3zM1267 445h1v1h-1zM1562 535h1.3v1.3h-1.3zM1353 521h1.3v1.3h-1.3zM1548 545h1v1h-1zM1342 509h1v1h-1zM1316 500h1v1h-1zM1298 490h1v1h-1zM1530 541h1v1h-1zM1421 520h1v1h-1zM1537 542h1.3v1.3h-1.3zM1209 537h1v1h-1zM1454 457h1v1h-1zM1417 521h1v1h-1zM1509 502h1v1h-1zM1222 447h1v1h-1zM1244 525h1v1h-1zM1343 408h1v1h-1zM1547 503h1v1h-1zM1586 481h1v1h-1zM1366 542h1.3v1.3h-1.3zM1453 445h1v1h-1zM1502 503h1v1h-1zM1526 471h1v1h-1zM1569 446h1v1h-1zM1521 504h1v1h-1zM1228 459h1v1h-1zM1204 463h1v1h-1zM1310 496h1v1h-1zM1426 491h1.3v1.3h-1.3zM1189 523h1v1h-1zM1387 533h1.3v1.3h-1.3zM1511 477h1v1h-1zM1518 501h1v1h-1zM1305 414h1v1h-1zM1265 495h1v1h-1zM1210 468h1.3v1.3h-1.3zM1445 483h1v1h-1zM1320 492h1v1h-1zM1532 487h1v1h-1zM1321 517h1v1h-1zM1444 477h1v1h-1zM1584 513h1.3v1.3h-1.3zM1279 489h1.3v1.3h-1.3zM1259 402h1v1h-1zM1555 464h1v1h-1zM1460 507h1v1h-1zM1446 391h1v1h-1zM1371 470h1v1h-1zM1272 413h1.3v1.3h-1.3zM1353 428h1v1h-1zM1233 423h1v1h-1zM1522 475h1v1h-1zM1578 496h1v1h-1zM1308 494h1v1h-1zM1444 449h1v1h-1zM1207 446h1v1h-1zM1357 521h1v1h-1zM1410 419h1v1h-1zM1517 450h1v1h-1zM1576 421h1v1h-1zM1291 439h1.3v1.3h-1.3zM1304 445h1v1h-1zM1195 502h1v1h-1zM1494 428h1v1h-1zM1490 487h1v1h-1zM1530 515h1v1h-1zM1265 539h1.3v1.3h-1.3zM1331 492h1v1h-1zM1366 476h1v1h-1zM1354 486h1.3v1.3h-1.3zM1374 461h1.3v1.3h-1.3zM1575 526h1v1h-1zM1386 536h1v1h-1zM1335 529h1.3v1.3h-1.3zM1519 498h1v1h-1zM1204 483h1v1h-1zM1247 492h1.3v1.3h-1.3zM1544 537h1.3v1.3h-1.3zM1499 486h1v1h-1zM1232 540h1v1h-1zM1428 501h1v1h-1zM1592 541h1v1h-1zM1236 458h1.3v1.3h-1.3zM1450 423h1v1h-1zM1473 543h1v1h-1zM1339 476h1v1h-1zM1538 535h1.3v1.3h-1.3zM1591 442h1v1h-1zM1391 517h1v1h-1zM1267 517h1v1h-1zM1549 542h1v1h-1zM1495 434h1v1h-1zM1328 535h1v1h-1zM1478 536h1v1h-1zM1445 494h1v1h-1zM1545 451h1v1h-1zM1246 488h1v1h-1zM1385 526h1.3v1.3h-1.3zM1208 441h1v1h-1zM1386 495h1.3v1.3h-1.3zM1307 519h1.3v1.3h-1.3zM1397 533h1.3v1.3h-1.3zM1575 527h1v1h-1zM1410 443h1v1h-1zM1367 469h1.3v1.3h-1.3zM1260 445h1.3v1.3h-1.3zM1353 507h1v1h-1zM1233 393h1.3v1.3h-1.3zM1330 468h1.3v1.3h-1.3zM1217 544h1v1h-1zM1217 415h1.3v1.3h-1.3zM1252 464h1.3v1.3h-1.3zM1422 440h1v1h-1zM1332 505h1.3v1.3h-1.3zM1451 412h1v1h-1zM1339 468h1v1h-1zM1361 456h1v1h-1zM1409 508h1.3v1.3h-1.3zM1354 520h1.3v1.3h-1.3zM1559 543h1v1h-1zM1316 519h1v1h-1zM1577 526h1v1h-1zM1372 530h1.3v1.3h-1.3zM1515 513h1v1h-1zM1218 482h1.3v1.3h-1.3zM1515 479h1v1h-1zM1528 542h1.3v1.3h-1.3zM1589 433h1v1h-1zM1334 511h1.3v1.3h-1.3zM1246 519h1v1h-1zM1499 488h1v1h-1zM1294 517h1v1h-1zM1258 443h1.3v1.3h-1.3zM1366 455h1.3v1.3h-1.3zM1488 496h1.3v1.3h-1.3zM1563 496h1v1h-1zM1411 433h1v1h-1zM1523 427h1v1h-1zM1217 493h1.3v1.3h-1.3zM1343 504h1v1h-1zM1339 502h1.3v1.3h-1.3zM1576 448h1.3v1.3h-1.3zM1589 532h1.3v1.3h-1.3zM1539 498h1v1h-1zM1242 483h1v1h-1zM1529 472h1.3v1.3h-1.3zM1332 525h1.3v1.3h-1.3zM1578 456h1v1h-1zM1336 440h1v1h-1zM1453 529h1v1h-1zM1208 505h1.3v1.3h-1.3zM1404 532h1.3v1.3h-1.3zM1584 477h1v1h-1zM1371 508h1v1h-1zM1192 411h1v1h-1zM1330 436h1v1h-1zM1450 467h1.3v1.3h-1.3zM1475 515h1.3v1.3h-1.3zM1417 513h1.3v1.3h-1.3zM1294 494h1v1h-1zM1462 418h1.3v1.3h-1.3zM1311 506h1v1h-1zM1517 529h1v1h-1zM1204 539h1.3v1.3h-1.3zM1527 498h1.3v1.3h-1.3zM1291 411h1v1h-1zM1555 408h1v1h-1zM1463 532h1v1h-1zM1255 522h1v1h-1zM1575 425h1.3v1.3h-1.3zM1309 514h1v1h-1zM1255 445h1v1h-1zM1555 430h1v1h-1zM1257 502h1.3v1.3h-1.3zM1374 538h1v1h-1zM1379 483h1.3v1.3h-1.3zM1473 488h1.3v1.3h-1.3zM1404 536h1v1h-1zM1579 515h1.3v1.3h-1.3zM1364 534h1.3v1.3h-1.3zM1429 523h1v1h-1zM1258 499h1v1h-1zM1265 437h1v1h-1zM1367 452h1.3v1.3h-1.3zM1530 528h1v1h-1zM1381 524h1v1h-1zM1510 539h1.3v1.3h-1.3zM1538 499h1v1h-1zM1547 461h1v1h-1zM1308 438h1.3v1.3h-1.3zM1585 472h1v1h-1zM1411 430h1.3v1.3h-1.3zM1584 472h1v1h-1zM1472 399h1v1h-1zM1301 451h1.3v1.3h-1.3zM1233 461h1.3v1.3h-1.3zM1512 499h1v1h-1zM1422 431h1v1h-1zM1472 544h1v1h-1zM1264 477h1.3v1.3h-1.3zM1306 511h1v1h-1zM1366 530h1.3v1.3h-1.3zM1244 451h1v1h-1zM1436 437h1v1h-1zM1591 520h1v1h-1zM1513 413h1v1h-1zM1246 465h1v1h-1zM1367 521h1.3v1.3h-1.3zM1544 418h1v1h-1zM1445 485h1v1h-1zM1502 457h1v1h-1zM1591 452h1v1h-1zM1267 428h1.3v1.3h-1.3zM1445 474h1v1h-1zM1526 484h1v1h-1zM1447 452h1v1h-1zM1586 483h1.3v1.3h-1.3zM1237 525h1v1h-1zM1577 543h1v1h-1zM1545 474h1.3v1.3h-1.3zM1466 418h1v1h-1zM1351 404h1.3v1.3h-1.3zM1457 463h1v1h-1zM1376 479h1.3v1.3h-1.3zM1439 435h1.3v1.3h-1.3zM1302 493h1v1h-1zM1242 538h1v1h-1zM1361 524h1v1h-1zM1446 500h1v1h-1zM1410 542h1.3v1.3h-1.3zM1443 538h1.3v1.3h-1.3zM1280 542h1.3v1.3h-1.3zM1507 445h1v1h-1zM1425 461h1.3v1.3h-1.3zM1496 456h1v1h-1zM1362 496h1.3v1.3h-1.3zM1265 481h1.3v1.3h-1.3zM1518 506h1v1h-1zM1303 511h1v1h-1zM1502 413h1v1h-1zM1294 531h1v1h-1zM1393 520h1v1h-1zM1385 406h1.3v1.3h-1.3zM1260 472h1.3v1.3h-1.3zM1204 504h1v1h-1zM1426 447h1v1h-1zM1540 456h1v1h-1zM1571 510h1v1h-1zM1342 458h1v1h-1zM1579 523h1.3v1.3h-1.3zM1401 536h1v1h-1zM1357 446h1v1h-1zM1411 472h1v1h-1zM1242 520h1.3v1.3h-1.3zM1481 475h1v1h-1zM1316 463h1v1h-1zM1578 501h1v1h-1zM1514 485h1v1h-1zM1371 526h1v1h-1zM1302 472h1v1h-1zM1377 501h1.3v1.3h-1.3zM1589 398h1v1h-1zM1485 535h1.3v1.3h-1.3zM1220 467h1.3v1.3h-1.3zM1546 498h1.3v1.3h-1.3zM1183 445h1.3v1.3h-1.3zM1347 513h1v1h-1zM1252 503h1v1h-1zM1209 525h1.3v1.3h-1.3zM1488 530h1.3v1.3h-1.3zM1394 421h1.3v1.3h-1.3zM1330 538h1v1h-1zM1191 506h1v1h-1zM1267 468h1.3v1.3h-1.3zM1370 511h1.3v1.3h-1.3zM1515 473h1v1h-1zM1398 521h1.3v1.3h-1.3zM1579 544h1.3v1.3h-1.3zM1367 539h1v1h-1zM1387 465h1v1h-1zM1223 414h1v1h-1zM1387 534h1v1h-1zM1376 515h1.3v1.3h-1.3zM1575 483h1v1h-1zM1345 531h1v1h-1zM1555 525h1.3v1.3h-1.3zM1512 429h1v1h-1zM1518 431h1v1h-1zM1450 515h1v1h-1zM1576 458h1.3v1.3h-1.3zM1259 540h1v1h-1zM1245 407h1v1h-1zM1581 444h1.3v1.3h-1.3zM1238 423h1v1h-1zM1291 529h1v1h-1zM1209 427h1.3v1.3h-1.3zM1578 532h1v1h-1zM1341 467h1.3v1.3h-1.3zM1576 442h1v1h-1zM1530 518h1v1h-1zM1390 531h1.3v1.3h-1.3zM1266 482h1.3v1.3h-1.3zM1390 478h1v1h-1zM1233 485h1v1h-1zM1386 500h1v1h-1zM1578 518h1v1h-1zM1226 515h1v1h-1zM1581 515h1v1h-1zM1389 533h1.3v1.3h-1.3zM1462 449h1v1h-1zM1514 498h1v1h-1zM1222 512h1.3v1.3h-1.3zM1548 523h1.3v1.3h-1.3zM1556 508h1v1h-1zM1294 476h1.3v1.3h-1.3zM1292 432h1v1h-1zM1471 463h1v1h-1zM1532 464h1.3v1.3h-1.3zM1494 539h1v1h-1zM1204 542h1v1h-1zM1546 447h1v1h-1zM1533 446h1.3v1.3h-1.3zM1269 537h1v1h-1zM1560 505h1.3v1.3h-1.3zM1517 498h1v1h-1zM1436 418h1v1h-1zM1411 480h1v1h-1zM1529 491h1.3v1.3h-1.3zM1341 481h1v1h-1zM1532 409h1v1h-1zM1216 497h1.3v1.3h-1.3zM1585 523h1.3v1.3h-1.3zM1217 480h1v1h-1zM1197 392h1v1h-1zM1546 501h1.3v1.3h-1.3zM1198 503h1v1h-1zM1585 493h1.3v1.3h-1.3zM1445 500h1.3v1.3h-1.3zM1506 505h1v1h-1zM1474 522h1v1h-1zM1220 510h1v1h-1zM1529 528h1.3v1.3h-1.3zM1439 460h1.3v1.3h-1.3zM1509 485h1v1h-1zM1592 533h1v1h-1zM1391 502h1v1h-1zM1179 459h1v1h-1zM1209 508h1v1h-1zM1337 541h1v1h-1zM1548 541h1v1h-1zM1290 422h1v1h-1zM1388 481h1.3v1.3h-1.3zM1366 415h1.3v1.3h-1.3zM1301 478h1v1h-1zM1395 542h1v1h-1zM1547 537h1v1h-1zM1534 427h1.3v1.3h-1.3zM1185 496h1v1h-1zM1254 505h1v1h-1zM1416 435h1v1h-1zM1423 538h1v1h-1zM1369 488h1v1h-1zM1552 433h1.3v1.3h-1.3zM1439 479h1v1h-1zM1258 531h1.3v1.3h-1.3zM1579 474h1.3v1.3h-1.3zM1513 506h1v1h-1zM1279 470h1v1h-1zM1482 452h1.3v1.3h-1.3zM1517 532h1v1h-1zM1306 466h1v1h-1zM1295 500h1v1h-1zM1556 504h1v1h-1zM1532 515h1.3v1.3h-1.3zM1302 494h1v1h-1zM1497 513h1.3v1.3h-1.3zM1590 474h1v1h-1zM1208 457h1v1h-1zM1218 542h1v1h-1zM1537 509h1v1h-1zM1253 491h1v1h-1zM1476 444h1.3v1.3h-1.3zM1400 530h1v1h-1zM1202 545h1.3v1.3h-1.3zM1267 453h1v1h-1zM1286 492h1v1h-1zM1557 468h1.3v1.3h-1.3zM1498 466h1v1h-1zM1216 447h1v1h-1zM1545 536h1v1h-1zM1517 510h1v1h-1zM1417 525h1v1h-1zM1231 475h1v1h-1zM1210 413h1.3v1.3h-1.3zM1479 543h1.3v1.3h-1.3zM1411 538h1v1h-1zM1593 446h1.3v1.3h-1.3zM1549 502h1v1h-1zM1366 544h1.3v1.3h-1.3zM1337 444h1v1h-1zM1496 537h1v1h-1zM1224 536h1v1h-1zM1590 502h1.3v1.3h-1.3zM1496 469h1v1h-1zM1226 503h1v1h-1zM1560 529h1v1h-1zM1353 502h1.3v1.3h-1.3zM1257 434h1.3v1.3h-1.3zM1462 510h1v1h-1zM1435 417h1.3v1.3h-1.3zM1210 539h1.3v1.3h-1.3zM1364 502h1v1h-1zM1575 518h1v1h-1zM1531 503h1v1h-1zM1511 493h1.3v1.3h-1.3zM1279 472h1v1h-1zM1473 499h1v1h-1zM1578 471h1v1h-1zM1207 497h1v1h-1zM1276 486h1v1h-1zM1453 539h1v1h-1zM1305 487h1.3v1.3h-1.3zM1192 526h1v1h-1zM1427 520h1v1h-1zM1511 470h1v1h-1zM1446 491h1v1h-1zM1344 492h1.3v1.3h-1.3zM1209 497h1v1h-1zM1442 541h1.3v1.3h-1.3zM1290 534h1.3v1.3h-1.3zM1390 522h1v1h-1zM1355 520h1v1h-1zM1272 458h1v1h-1zM1267 506h1v1h-1zM1294 443h1v1h-1zM1535 495h1.3v1.3h-1.3zM1325 471h1.3v1.3h-1.3zM1433 527h1.3v1.3h-1.3zM1485 454h1v1h-1zM1253 543h1v1h-1zM1256 469h1v1h-1zM1537 510h1v1h-1zM1243 521h1v1h-1zM1234 411h1.3v1.3h-1.3zM1433 502h1v1h-1zM1261 447h1v1h-1zM1216 543h1.3v1.3h-1.3zM1548 500h1v1h-1zM1584 478h1v1h-1zM1209 483h1.3v1.3h-1.3zM1539 541h1v1h-1zM1362 479h1.3v1.3h-1.3zM1372 513h1v1h-1zM1520 446h1v1h-1zM1291 474h1v1h-1zM1561 525h1v1h-1zM1481 532h1v1h-1zM1372 518h1v1h-1zM1208 545h1.3v1.3h-1.3zM1219 495h1v1h-1zM1284 427h1v1h-1zM1370 540h1v1h-1zM1205 440h1.3v1.3h-1.3zM1549 529h1v1h-1zM1313 486h1v1h-1zM1558 407h1v1h-1zM1372 514h1v1h-1zM1184 528h1v1h-1zM1367 503h1v1h-1zM1386 534h1v1h-1zM1439 474h1v1h-1zM1433 529h1v1h-1zM1444 514h1.3v1.3h-1.3zM1378 444h1v1h-1zM1366 494h1v1h-1zM1555 499h1v1h-1zM1361 491h1.3v1.3h-1.3zM1333 477h1.3v1.3h-1.3zM1499 522h1v1h-1zM1398 435h1v1h-1zM1304 504h1v1h-1zM1313 488h1v1h-1z" fill="#d4cfee" fill-opacity="0.9"/>
<circle cx="1210" cy="520" r="7.5" fill="#d8dcec" opacity="0.8"/>
<path d="M1240,548 Q1252,500 1292,478 Q1330,462 1376,466 Q1425,462 1458,474 Q1505,498 1522,548Z" fill="url(#shirt)"/>
<path d="M1342,470 L1412,470 L1406,512 L1348,512Z" fill="#4e4048"/>
<path d="M1342,512 Q1364,503 1388,510 L1386,548 L1345,548Z" fill="#8e908c"/>
<path d="M1300,488 L1338,474 L1352,535 L1312,528Z" fill="#141e36"/><path d="M1408,476 L1440,480 L1445,522 L1400,524Z" fill="#141e36"/>
<path d="M1336,476 L1306,522 M1412,480 L1440,512" stroke="#a8bce0" stroke-width="1" fill="none" opacity="0.6"/>
<ellipse cx="1321" cy="428" rx="6" ry="13" fill="#7c686e"/><ellipse cx="1433" cy="428" rx="6" ry="13" fill="#7c686e"/>
<path d="M1322,412 Q1318,358 1352,349 Q1378,343 1405,349 Q1436,358 1432,412 Q1428,380 1410,366 Q1378,356 1344,366 Q1326,380 1322,412Z" fill="#24242c"/>
<path d="M1326,410 Q1328,366 1377,362 Q1428,366 1430,410 Q1432,452 1416,476 Q1398,494 1376,494 Q1352,494 1338,476 Q1322,452 1326,410Z" fill="url(#face)"/>
<ellipse cx="1378" cy="380" rx="32" ry="15" fill="url(#fore)"/>
<path d="M1332,398 Q1352,393 1373,398 L1371,424 Q1350,429 1336,423Z M1384,398 Q1408,393 1430,398 L1428,423 Q1410,429 1388,424Z" fill="#c8bcc6" fill-opacity="0.25" stroke="#d8d0d8" stroke-width="1.3" stroke-opacity="0.55"/>
<path d="M1342,411 Q1353,408 1364,411 M1393,411 Q1405,408 1417,411" stroke="#4a3a42" stroke-width="2" fill="none" opacity="0.55"/>
<path d="M1372,425 Q1367,440 1369,446 Q1378,450 1389,446 Q1391,438 1385,425" fill="#b89ca2" opacity="0.55"/>
<path d="M1354,457 Q1376,450 1400,457 Q1378,467 1354,457Z" fill="#3a2a30"/>
<path d="M1360,467 Q1378,474 1396,467" stroke="#c0a8b0" stroke-width="2" fill="none" opacity="0.4"/>
<path d="M1362,548 Q1366,536 1384,531 Q1420,524 1462,527 Q1488,532 1491,548Z" fill="#bca6a8"/><path d="M1392,531 Q1430,527 1458,529" stroke="#d8c8cc" stroke-width="2" fill="none" opacity="0.6"/>
<g fill="#c8d8f0" opacity="0.8"><circle cx="1466" cy="520" r="1.3"/><circle cx="1470" cy="516" r="1.3"/><circle cx="1474" cy="520" r="1.3"/><circle cx="1470" cy="524" r="1.3"/></g>
<rect x="1188.5" y="320.5" width="135.2" height="24.3" rx="7" fill="#1e1c1f" fill-opacity="0.92"/>
<path d="M1200.6,326 L1203.8,326 L1205.2,330.5 L1209,334.9 L1199.2,334.9 L1201.2,330.5Z" fill="#f4f4f4"/><rect x="1203.4" y="334.5" width="1.6" height="5.6" fill="#f4f4f4"/><circle cx="1207.8" cy="326.8" r="1.9" fill="#f4f4f4"/>
<g fill="none" stroke="#f0f0f0" stroke-width="1.6"><ellipse cx="1481.5" cy="328.5" rx="3.6" ry="4.2"/><ellipse cx="1488.5" cy="328" rx="4.6" ry="5"/><ellipse cx="1496" cy="328.5" rx="3.6" ry="4.2"/></g>
<g fill="#e8e8e8"><rect x="1518.0" y="329.0" width="1.8" height="1.8"/><rect x="1518.0" y="332.2" width="1.8" height="1.8"/><rect x="1518.0" y="335.4" width="1.8" height="1.8"/><rect x="1521.2" y="329.0" width="1.8" height="1.8"/><rect x="1521.2" y="332.2" width="1.8" height="1.8"/><rect x="1521.2" y="335.4" width="1.8" height="1.8"/><rect x="1524.4" y="329.0" width="1.8" height="1.8"/><rect x="1524.4" y="332.2" width="1.8" height="1.8"/><rect x="1524.4" y="335.4" width="1.8" height="1.8"/></g>
<path d="M1530,343 Q1548,338 1566,337" stroke="#e0e0e0" stroke-width="0.8" fill="none"/>
<rect x="1181.7" y="522.5" width="111.3" height="21.7" rx="5" fill="#2e3034" fill-opacity="0.82"/>
<g fill="#f2f2f2"><rect x="1183.8" y="535.5" width="2" height="4"/><rect x="1187.3" y="532.5" width="2" height="7"/><rect x="1190.8" y="529.8" width="2" height="9.7"/><rect x="1194.3" y="527" width="2" height="12.5"/></g>
</g></svg>
<div class="t" style="left:1215.69px;top:327.00px;font-size:13.37px;line-height:13.37px;color:#f0f0f0;transform:scaleX(0.9468);transform-origin:0 0;">Remove spotlight</div>
<div class="t" style="left:1199.90px;top:354.00px;font-size:8.58px;line-height:8.58px;color:#c9c66a;transform:scaleX(1.0064);transform-origin:0 0;">iLearn Thematic Webinar</div>
<div class="t" style="left:1203.40px;top:363.00px;font-size:22.97px;line-height:22.97px;font-weight:bold;color:#f2df3a;transform:scaleX(0.8298);transform-origin:0 0;-webkit-text-stroke:0.6px #f2df3a;">THE FRAUD F</div>
<div class="t" style="left:1203.00px;top:388.00px;font-size:7.27px;line-height:7.27px;font-weight:bold;color:#e4e4ea;transform:scaleX(0.8958);transform-origin:0 0;">THE ROLE OF AI IN REVOLUTIONIZING</div>
<div class="t" style="left:1469.50px;top:336.00px;font-size:8.14px;line-height:8.14px;font-weight:bold;color:#e6e6e6;transform:scaleX(0.7098);transform-origin:0 0;">Indonesia</div>
<div class="t" style="left:1498.71px;top:336.00px;font-size:8.14px;line-height:8.14px;font-weight:bold;color:#ffffff;transform:scaleX(1.0242);transform-origin:0 0;">Re</div>
<div class="t" style="left:1530.00px;top:328.00px;font-size:8.43px;line-height:8.43px;font-weight:bold;color:#e6e6e6;transform:scaleX(0.7383);transform-origin:0 0;">IndonesiaRe</div>
<div class="t" style="left:1203.78px;top:528.00px;font-size:13.66px;line-height:13.66px;color:#eeeeee;transform:scaleX(0.9636);transform-origin:0 0;">Dedi Kristianto</div>
<svg class="a" style="left:0;top:0" width="1600" height="900">
<rect x="49.4" y="808.6" width="8.6" height="15.5" rx="4.3" fill="none" stroke="#f2f2f2" stroke-width="1.5"/><path d="M46.3,819.5 Q46.3,828.5 53.7,828.5 Q61.3,828.5 61.3,819.5" fill="none" stroke="#f2f2f2" stroke-width="1.5"/><line x1="53.7" y1="828.5" x2="53.7" y2="832.5" stroke="#f2f2f2" stroke-width="1.5"/><line x1="49.7" y1="832.5" x2="58" y2="832.5" stroke="#f2f2f2" stroke-width="1.5"/><line x1="42.6" y1="832.3" x2="65.8" y2="809.2" stroke="#000" stroke-width="3.6"/><line x1="42.6" y1="832.3" x2="65.8" y2="809.2" stroke="#e0245e" stroke-width="2" stroke-linecap="round"/>
<path d="M84,823.2 L87.6,819 L91.2,823.2" fill="none" stroke="#f2f2f2" stroke-width="1.5" stroke-linecap="round" stroke-linejoin="round"/>
<rect x="138.6" y="814.1" width="15.7" height="13.5" rx="3" fill="none" stroke="#f2f2f2" stroke-width="1.5"/><path d="M154.3,819.2 L163.2,815 L163.2,827 L154.3,822.8" fill="none" stroke="#f2f2f2" stroke-width="1.5" stroke-linejoin="round"/>
<path d="M186,823.2 L189.5,819 L193,823.2" fill="none" stroke="#f2f2f2" stroke-width="1.5" stroke-linecap="round" stroke-linejoin="round"/>
<circle cx="441.8" cy="815.3" r="2.3" fill="none" stroke="#f2f2f2" stroke-width="1.4"/><path d="M444,829.6 L438.5,829.6 Q436,829.6 436,827 Q436,820.5 442,820.5 Q444.5,820.5 445.5,821.5" fill="none" stroke="#f2f2f2" stroke-width="1.4"/><circle cx="449.5" cy="818.3" r="3.2" fill="none" stroke="#f2f2f2" stroke-width="1.4"/><path d="M443.5,827.2 Q443.5,823.5 449,823.5 Q454.5,823.5 454.5,827.2 Q454.5,829.6 452,829.6 L446,829.6 Q443.5,829.6 443.5,827.2Z" fill="none" stroke="#f2f2f2" stroke-width="1.4"/>
<path d="M497.3,823.2 L501.05,819 L504.8,823.2" fill="none" stroke="#f2f2f2" stroke-width="1.5" stroke-linecap="round" stroke-linejoin="round"/>
<path d="M553.5,815.5 Q553.5,810 559,810 L566,810 Q568,810 569.5,811" fill="none" stroke="#f2f2f2" stroke-width="1.4"/><path d="M553,816.5 L562.5,816.5 Q566.3,816.5 566.3,820.5 L566.3,824.5 Q566.3,828.5 562.5,828.5 L558,828.5 L555.5,831.8 L554.5,828.3 Q548.6,828 548.6,824 L548.6,820.5 Q548.6,816.5 553,816.5Z" fill="none" stroke="#f2f2f2" stroke-width="1.4" stroke-linejoin="round"/><circle cx="553.7" cy="822.5" r="0.95" fill="#f2f2f2"/><circle cx="557.5" cy="822.5" r="0.95" fill="#f2f2f2"/><circle cx="561.3" cy="822.5" r="0.95" fill="#f2f2f2"/>
<circle cx="572" cy="813.8" r="7.9" fill="#e2313f"/>
<path d="M591.3,823.2 L594.8,819 L598.3,823.2" fill="none" stroke="#f2f2f2" stroke-width="1.5" stroke-linecap="round" stroke-linejoin="round"/>
<path d="M647.5,831.3 L638.5,822.5 Q634.5,817.5 637.5,812.8 Q641.5,808.5 647.2,812.8 Q653,808.8 658.5,812.5 Q663.2,817 659.5,823.5 Z" fill="none" stroke="#f2f2f2" stroke-width="1.4" stroke-linejoin="round" transform="rotate(-12 648 820)"/>
<rect x="728.8" y="810.9" width="25" height="20.2" rx="3" fill="#19d98c"/><path d="M741.3,827 L741.3,816 M736.8,820.2 L741.3,815.6 L745.8,820.2" fill="none" stroke="#000" stroke-width="2.2" stroke-linecap="round" stroke-linejoin="round"/>
<path d="M776.5,823.2 L780.15,819 L783.8,823.2" fill="none" stroke="#f2f2f2" stroke-width="1.5" stroke-linecap="round" stroke-linejoin="round"/>
<path d="M834.3,811 Q839.5,813.2 843.3,812.5 L843.3,821 Q843.3,827.5 834.3,831.3 Q825.3,827.5 825.3,821 L825.3,812.5 Q829.2,813.2 834.3,811Z" fill="none" stroke="#f2f2f2" stroke-width="1.5" stroke-linejoin="round"/><path d="M834.3,814.5 L828.5,815.5 L828.5,821 L834.3,821Z M834.3,821 L840.2,821 Q839.5,826 834.3,828.3Z" fill="#f2f2f2"/>
<defs><linearGradient id="ai" x1="0" y1="0" x2="1" y2="1"><stop offset="0" stop-color="#e6f6fb"/><stop offset="0.5" stop-color="#9fd2e6"/><stop offset="1" stop-color="#d2eef6"/></linearGradient></defs>
<path d="M924.2,810.5 Q926,820 935.5,821.3 Q926,822.6 924.2,832 Q922.4,822.6 912.8,821.3 Q922.4,820 924.2,810.5Z" fill="url(#ai)"/><path d="M933,808.6 Q933.6,811.3 936.4,812 Q933.6,812.7 933,815.4 Q932.4,812.7 929.6,812 Q932.4,811.3 933,808.6Z" fill="#d6eef6"/>
<path d="M1005.6,818.5 L1005.6,814.5 Q1005.6,810.5 1009.6,810.5 L1013.8,810.5" fill="none" stroke="#f2f2f2" stroke-width="1.5" stroke-linecap="round"/><path d="M1026.8,822.5 L1026.8,827 Q1026.8,831.2 1022.6,831.2 L1018.5,831.2" fill="none" stroke="#f2f2f2" stroke-width="1.5" stroke-linecap="round"/><circle cx="1022.4" cy="814.6" r="3.6" fill="none" stroke="#f2f2f2" stroke-width="1.5"/><circle cx="1009.8" cy="827.2" r="3.6" fill="none" stroke="#f2f2f2" stroke-width="1.5"/>
<path d="M1041.6,823.2 L1045.3,819 L1049,823.2" fill="none" stroke="#f2f2f2" stroke-width="1.5" stroke-linecap="round" stroke-linejoin="round"/>
<circle cx="1099.5" cy="820.8" r="10.8" fill="none" stroke="#f2f2f2" stroke-width="1.5"/><circle cx="1099.5" cy="820.8" r="4.6" fill="#f2f2f2"/>
<circle cx="1192.3" cy="820.7" r="11.8" fill="none" stroke="#f2f2f2" stroke-width="1.5"/><circle cx="1192.3" cy="814.2" r="1.6" fill="#f2f2f2"/><path d="M1189.8,818 L1192.8,818 L1192.8,826 M1189.4,826.4 L1196,826.4" fill="none" stroke="#f2f2f2" stroke-width="2"/>
<circle cx="1287.9" cy="820.7" r="11.8" fill="none" stroke="#f2f2f2" stroke-width="1.5"/><circle cx="1281.5" cy="821" r="1.7" fill="#f2f2f2"/><circle cx="1287.9" cy="821" r="1.7" fill="#f2f2f2"/><circle cx="1294.3" cy="821" r="1.7" fill="#f2f2f2"/>
<path d="M1547.5,808.3 L1562.5,808.3 L1562.5,826 L1556.3,832.6 L1556.3,814.5 L1562.3,808.5" fill="none" stroke="#e8195a" stroke-width="1.4" stroke-linejoin="round"/>
<circle cx="1546.8" cy="813.8" r="2.6" fill="none" stroke="#f2f2f2" stroke-width="1.3"/><path d="M1544,818 Q1539,819 1539,822.5 Q1539,824 1541,823.5 L1543,821.5 L1542.5,826 L1538.8,831.5 Q1539.5,833.5 1541.3,832.5 L1545.5,827.5 L1547.3,832.2 Q1549,833.5 1550,831.8 L1549,826 L1549.8,821.5 L1551.5,823.5 Q1553.5,823.5 1552.8,821.5 Q1551,818 1548.5,817.5 Z" fill="none" stroke="#f2f2f2" stroke-width="1.2" stroke-linejoin="round"/>
</svg>
<div class="t" style="left:37.30px;top:841.00px;font-size:11.48px;line-height:11.48px;color:#f4f4f4;transform:scaleX(1.1708);transform-origin:0 0;-webkit-text-stroke:0.45px #f4f4f4;">Audio</div>
<div class="t" style="left:135.20px;top:841.00px;font-size:11.48px;line-height:11.48px;color:#f4f4f4;transform:scaleX(1.0972);transform-origin:0 0;-webkit-text-stroke:0.45px #f4f4f4;">Video</div>
<div class="t" style="left:411.48px;top:841.00px;font-size:11.48px;line-height:11.48px;color:#f4f4f4;transform:scaleX(1.1238);transform-origin:0 0;-webkit-text-stroke:0.45px #f4f4f4;">Participants</div>
<div class="t" style="left:547.30px;top:841.00px;font-size:11.48px;line-height:11.48px;color:#f4f4f4;transform:scaleX(1.0485);transform-origin:0 0;-webkit-text-stroke:0.45px #f4f4f4;">Chat</div>
<div class="t" style="left:632.48px;top:841.00px;font-size:11.48px;line-height:11.48px;color:#f4f4f4;transform:scaleX(1.0347);transform-origin:0 0;-webkit-text-stroke:0.45px #f4f4f4;">React</div>
<div class="t" style="left:724.76px;top:841.00px;font-size:11.48px;line-height:11.48px;color:#f4f4f4;transform:scaleX(1.0584);transform-origin:0 0;-webkit-text-stroke:0.45px #f4f4f4;">Share</div>
<div class="t" style="left:804.68px;top:841.00px;font-size:11.48px;line-height:11.48px;color:#f4f4f4;transform:scaleX(1.1487);transform-origin:0 0;-webkit-text-stroke:0.45px #f4f4f4;">Host tools</div>
<div class="t" style="left:884.30px;top:841.00px;font-size:11.48px;line-height:11.48px;color:#f4f4f4;transform:scaleX(1.1245);transform-origin:0 0;-webkit-text-stroke:0.45px #f4f4f4;">AI Companion</div>
<div class="t" style="left:1001.70px;top:841.00px;font-size:11.48px;line-height:11.48px;color:#f4f4f4;transform:scaleX(1.1158);transform-origin:0 0;-webkit-text-stroke:0.45px #f4f4f4;">Apps</div>
<div class="t" style="left:1079.37px;top:841.00px;font-size:11.48px;line-height:11.48px;color:#f4f4f4;transform:scaleX(1.0539);transform-origin:0 0;-webkit-text-stroke:0.45px #f4f4f4;">Record</div>
<div class="t" style="left:1154.78px;top:841.00px;font-size:11.48px;line-height:11.48px;color:#f4f4f4;transform:scaleX(1.1957);transform-origin:0 0;-webkit-text-stroke:0.45px #f4f4f4;">Meeting info</div>
<div class="t" style="left:1272.45px;top:841.00px;font-size:11.48px;line-height:11.48px;color:#f4f4f4;transform:scaleX(1.1872);transform-origin:0 0;-webkit-text-stroke:0.45px #f4f4f4;">More</div>
<div class="t" style="left:1533.66px;top:841.00px;font-size:11.48px;line-height:11.48px;color:#f4f4f4;transform:scaleX(1.0437);transform-origin:0 0;-webkit-text-stroke:0.45px #f4f4f4;">Leave</div>
<div class="t" style="left:462.70px;top:815.00px;font-size:11.92px;line-height:11.92px;font-weight:bold;color:#bdbdbd;transform:scaleX(1.0048);transform-origin:0 0;">975</div>
<div class="t" style="left:567.80px;top:809.00px;font-size:11.05px;line-height:11.05px;font-weight:bold;color:#fff;transform:scaleX(1.2788);transform-origin:0 0;">3</div>
<div class="a" style="left:51px;top:859.5px;width:298px;height:39px;background:#fff"></div>
<div class="a" style="left:610px;top:858px;width:51px;height:42px;background:#ececec"></div>
<div class="a" style="left:713px;top:858px;width:51px;height:42px;background:#e4e4e4"></div>
<div class="a" style="left:407.6px;top:897.5px;width:41.69999999999999px;height:2.5px;background:#0f6cbd"></div>
<div class="a" style="left:511px;top:897.5px;width:40.299999999999955px;height:2.5px;background:#0f6cbd"></div>
<div class="a" style="left:562.8px;top:897.5px;width:41.200000000000045px;height:2.5px;background:#0f6cbd"></div>
<div class="a" style="left:610.3px;top:897.5px;width:49.40000000000009px;height:2.5px;background:#0f6cbd"></div>
<div class="a" style="left:665.8px;top:897.5px;width:41.700000000000045px;height:2.5px;background:#0f6cbd"></div>
<div class="a" style="left:713.8px;top:897.5px;width:50.200000000000045px;height:2.5px;background:#0f6cbd"></div>
<svg class="a" style="left:0;top:0" width="1600" height="900">
<path d="M16.7,872.5 L24.3,871.5 L24.3,878.8 L16.7,878.8Z M25.5,871.3 L33,870.3 L33,878.8 L25.5,878.8Z M16.7,880 L24.3,880 L24.3,887.2 L16.7,886.3Z M25.5,880 L33,880 L33,888 L25.5,887.2Z" fill="#000"/>
<circle cx="76.3" cy="875.5" r="5.8" fill="none" stroke="#222" stroke-width="1.4"/><line x1="63.8" y1="888" x2="72" y2="879.8" stroke="#222" stroke-width="1.5" stroke-linecap="round"/>
<path d="M300.5,866.7 Q302,876 311.8,877.7 Q302,879.3 300.5,889 Q299,879.3 289,877.7 Q299,876 300.5,866.7Z" fill="#f7b716"/><path d="M324,877 Q324.6,881.3 329,882 Q324.6,882.7 324,887 Q323.4,882.7 319,882 Q323.4,881.3 324,877Z" fill="#f5b51a"/><path d="M279.8,883.5 Q280.3,886.3 283.2,886.8 Q280.3,887.3 279.8,890.2 Q279.3,887.3 276.4,886.8 Q279.3,886.3 279.8,883.5Z" fill="#1b9ae0"/><circle cx="317.2" cy="868.6" r="1.8" fill="#e0612a"/><circle cx="336.3" cy="889" r="1.6" fill="#6cbb3c"/>
<path d="M366.8,871 L366.8,886.7 M377.2,871 L377.2,886.7 M382,871 L382,875.6 M382,879.8 L382,886.7" fill="none" stroke="#4a4a4a" stroke-width="1.1"/><rect x="366.8" y="873.7" width="10.4" height="2.1" fill="#555"/><rect x="366.8" y="882.3" width="10.4" height="2.1" fill="#555"/><circle cx="382" cy="877.4" r="1.1" fill="#000"/>
<rect x="417.5" y="870" width="10" height="3.5" rx="1" fill="#e2a513"/><path d="M417.5,872.5 L439,872.5 Q439.5,872.5 439.5,873 L439.5,888 Q439.5,888.5 439,888.5 L418,888.5 Q417.5,888.5 417.5,888 Z" fill="#f8d66b"/><path d="M422,888 L422,880.5 L435,880.5 L435,888 L431.5,888 L431.5,883.5 L425.5,883.5 L425.5,888Z" fill="#1f7fd1"/>
<defs><radialGradient id="ff" cx="0.5" cy="0.3" r="0.7"><stop offset="0" stop-color="#ffe226"/><stop offset="0.5" stop-color="#ff7a1a"/><stop offset="1" stop-color="#e8266a"/></radialGradient><radialGradient id="ffc" cx="0.5" cy="0.5" r="0.5"><stop offset="0" stop-color="#8c4ff0"/><stop offset="1" stop-color="#6a2ad0"/></radialGradient></defs>
<circle cx="480.2" cy="879" r="11" fill="url(#ff)"/><circle cx="479.7" cy="879.8" r="5" fill="url(#ffc)"/><path d="M469.5,876 Q472,870 478,869.5 Q473,873.5 474.5,877Z" fill="#ff9a2a"/>
<rect x="519.5" y="868" width="14.5" height="16" fill="#0a64c2"/><rect x="526.5" y="868" width="7" height="7" fill="#28a8ea"/><rect x="533.5" y="868" width="7" height="7" fill="#0078d4"/><rect x="526.5" y="875" width="7" height="7" fill="#50d9ff"/><rect x="533.5" y="875" width="7" height="7" fill="#28a8ea"/><rect x="518.5" y="872.5" width="11.5" height="11" rx="1.2" fill="#0f6cbd"/><ellipse cx="524.2" cy="878" rx="3" ry="3.3" fill="none" stroke="#fff" stroke-width="1.5"/><rect x="531" y="882" width="14" height="10.5" rx="1" fill="#e5b270"/><path d="M531.5,882.5 L538,888 L544.5,882.5" fill="none" stroke="#fbe3c4" stroke-width="1.2"/>
<path d="M578.5,868 L587,868 L594,880 L585.5,880Z" fill="#f6bd16"/><path d="M578.5,868 L585,868 L577.5,881.5 L573.5,880 Z" fill="#1ea362"/><path d="M573.5,880 L585,880 L581,887.5 L577,887.5Z" fill="#2f6fe0"/><circle cx="588.8" cy="884.5" r="7.6" fill="#3a3330"/><circle cx="590.5" cy="885" r="4.5" fill="#8a7a70"/><ellipse cx="587" cy="883" rx="3" ry="4" fill="#1c2233"/>
<rect x="623.5" y="867" width="25" height="24.5" rx="11" fill="#0b5cff"/>
<defs><linearGradient id="ed" x1="0" y1="0" x2="1" y2="1"><stop offset="0" stop-color="#2fc2e8"/><stop offset="0.6" stop-color="#3bd07a"/><stop offset="1" stop-color="#1a7dd4"/></linearGradient></defs><circle cx="686.3" cy="879.3" r="12.3" fill="url(#ed)"/><path d="M674,880 Q674,891.6 686.3,891.6 Q694,891.6 697.5,887 Q690,889 686,885 Q681.5,881 684,878 Q686,875.5 690.5,877 Q688,873 683,873.5 Q674.5,875 674,880Z" fill="#1462b8"/><circle cx="689" cy="879.5" r="3.2" fill="#e0e0e0"/>
<circle cx="738.2" cy="879" r="12.3" fill="#dd3c2f"/><path d="M738.2,879 L727.5,885.2 A12.3,12.3 0 0 0 738.2,891.3Z" fill="#1f9a4e"/><path d="M727.5,885.2 A12.3,12.3 0 0 1 728,872.8 L738.2,879Z" fill="#1f9a4e"/><path d="M738.2,879 L750.5,879 A12.3,12.3 0 0 1 738.2,891.3Z" fill="#f9c419"/><circle cx="738.2" cy="879" r="5.6" fill="#fff"/><circle cx="738.2" cy="879" r="4.4" fill="#3a78e8"/><circle cx="743.5" cy="884.5" r="7.5" fill="#3b3431"/><circle cx="745.5" cy="885.5" r="4.3" fill="#907d70"/><ellipse cx="741.5" cy="883" rx="3" ry="4" fill="#1c2233"/>
<path d="M1295.3,881.5 L1301.5,875.5 L1307.7,881.5" fill="none" stroke="#222" stroke-width="1.2"/>
<rect x="1330.5" y="871" width="6.6" height="11.5" rx="3.3" fill="#111"/><path d="M1328.5,879 Q1328.5,885 1333.8,885 Q1339.2,885 1339.2,879" fill="none" stroke="#333" stroke-width="1.1"/><line x1="1333.8" y1="885" x2="1333.8" y2="888" stroke="#333" stroke-width="1.1"/><line x1="1331" y1="888" x2="1336.6" y2="888" stroke="#333" stroke-width="1.1"/>
<path d="M1359,872.5 L1376.5,871 L1376.5,884.5 L1359,885.5Z" fill="none" stroke="#333" stroke-width="1.2"/><path d="M1364,877.5 Q1367,874.5 1370,877 M1370,880.5 Q1367,883 1364,880.5" fill="none" stroke="#333" stroke-width="1"/><circle cx="1372.6" cy="883.8" r="3.2" fill="#2b6fd6"/>
<path d="M1401,886.5 Q1397.5,886 1398.5,882 L1406,874 Q1409,871.5 1411,873.5 Q1412.5,875.5 1410,878 L1402.5,885.5 M1405,880 Q1408,882 1412,879.5 L1414,879" fill="none" stroke="#333" stroke-width="1.2"/>
<rect x="1438.8" y="873.2" width="15.4" height="12.4" rx="1" fill="none" stroke="#333" stroke-width="1.2"/><line x1="1438.8" y1="881.8" x2="1454.2" y2="881.8" stroke="#333" stroke-width="1.1"/><line x1="1446.5" y1="881.8" x2="1446.5" y2="885.6" stroke="#333" stroke-width="1.1"/>
<path d="M1556.5,871 L1573.3,871 L1573.3,884.5 L1561,884.5 L1556.5,888Z" fill="#111"/><path d="M1559.5,874.5 L1570,874.5 M1559.5,877.5 L1570,877.5 M1559.5,880.5 L1566,880.5" stroke="#d5d5d5" stroke-width="1"/><circle cx="1572.4" cy="886.4" r="9.6" fill="#d5d5d5" stroke="#9a9a9a" stroke-width="0.8"/>
<line x1="1596.5" y1="858" x2="1596.5" y2="900" stroke="#a8a8a8" stroke-width="1"/>
</svg>
<div class="t" style="left:96.90px;top:872.00px;font-size:16.28px;line-height:16.28px;color:#3b3b3b;transform:scaleX(0.9451);transform-origin:0 0;">Type here to search</div>
<div class="t" style="left:629.00px;top:876.00px;font-size:7.95px;line-height:7.95px;font-weight:bold;color:#fff;transform:scaleX(0.7225);transform-origin:0 0;">zoom</div>
<div class="t" style="left:1490.54px;top:864.00px;font-size:12.35px;line-height:12.35px;color:#1c1c1c;transform:scaleX(0.9857);transform-origin:0 0;">10:43</div>
<div class="t" style="left:1473.57px;top:884.00px;font-size:12.65px;line-height:12.65px;color:#1c1c1c;transform:scaleX(1.0338);transform-origin:0 0;">04/11/2025</div>
<div class="t" style="left:1564.36px;top:880.00px;font-size:12.21px;line-height:12.21px;color:#111;transform:scaleX(1.0481);transform-origin:0 0;">20</div>
</body></html>
